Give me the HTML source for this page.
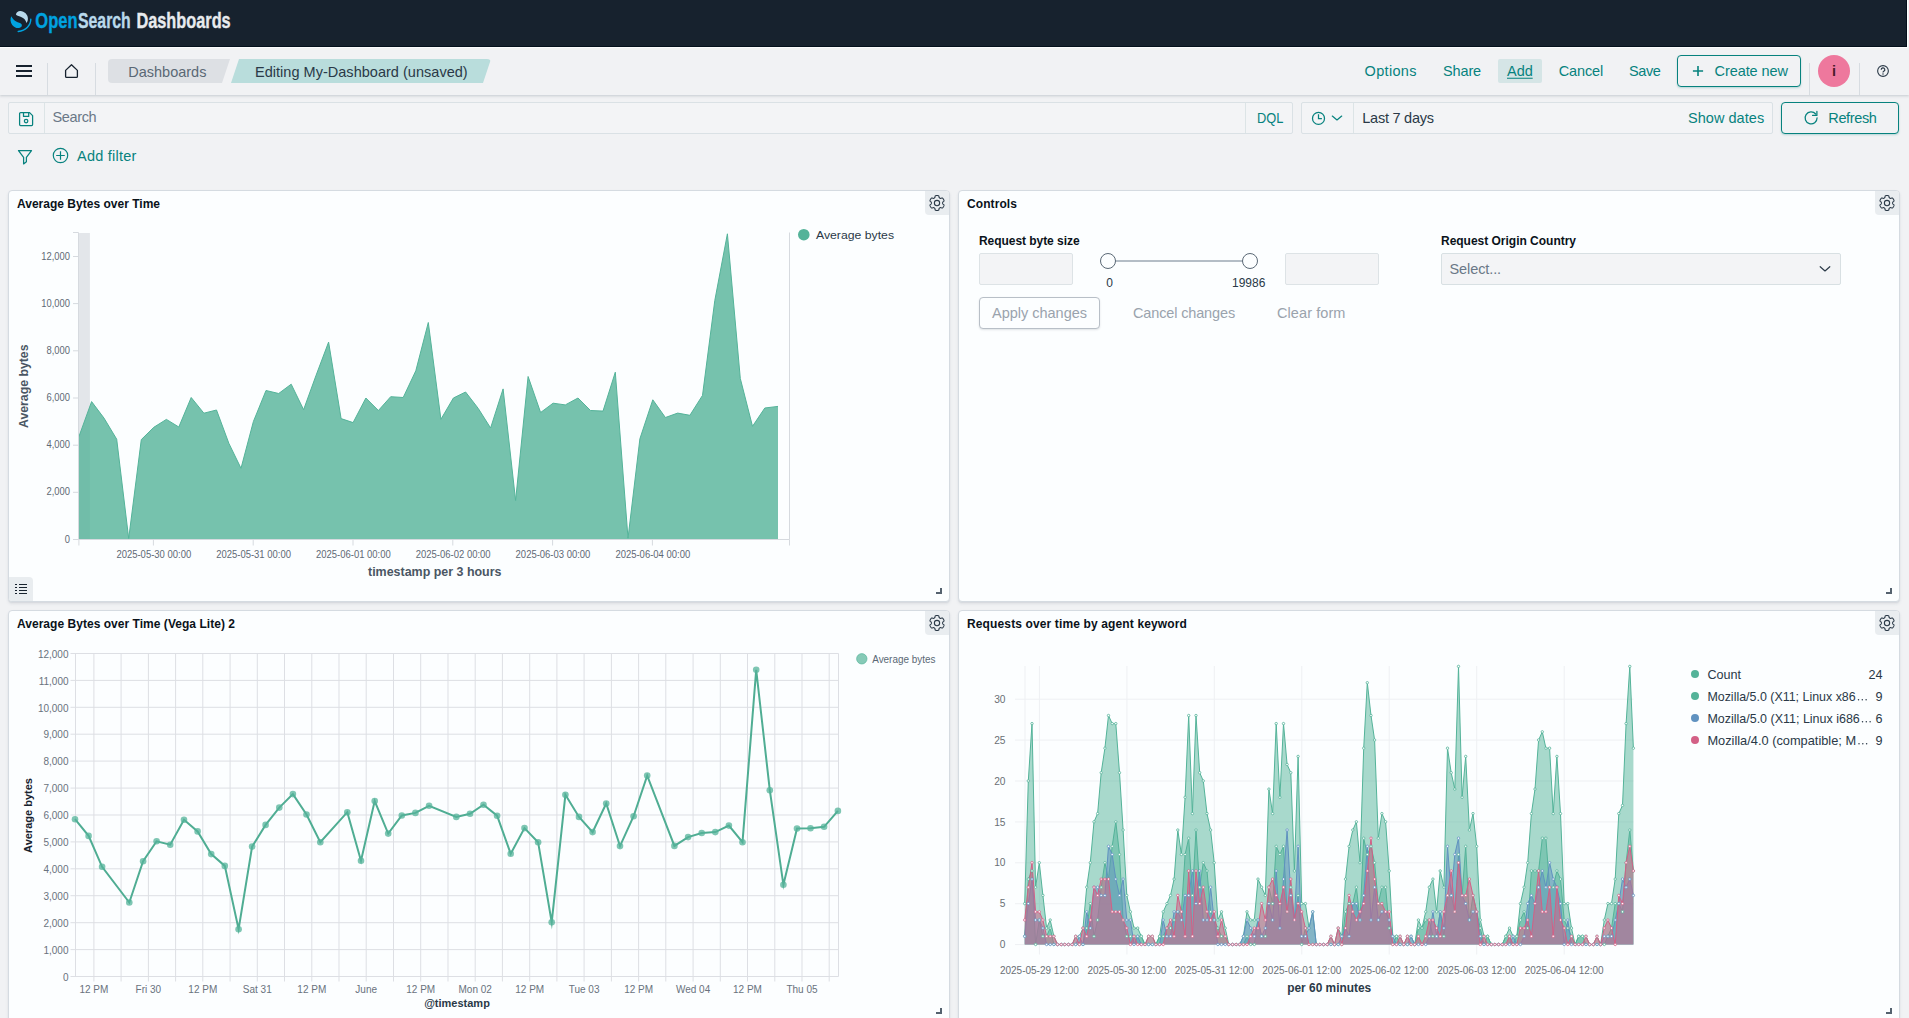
<!DOCTYPE html>
<html lang="en"><head><meta charset="utf-8"><title>My-Dashboard - OpenSearch Dashboards</title>
<style>
*{box-sizing:border-box}
html,body{margin:0;padding:0}
body{width:1909px;height:1018px;overflow:hidden;position:relative;background:#F1F2F4;
 font-family:"Liberation Sans",sans-serif;color:#2A3947;-webkit-font-smoothing:antialiased}
.abs{position:absolute}
.t{position:absolute;white-space:pre;line-height:1;transform-origin:0 50%}
.teal{color:#07827E}
.hdr{left:0;top:0;width:1907px;height:47px;background:#17222E;border-bottom:1px solid #04101C;border-right:1px solid #04101C}
.wl{background:#fff}
.nav{left:0;top:48px;width:1909px;height:47px;background:#F1F2F4;box-shadow:0 1px 2px rgba(60,75,90,.17),0 2px 3px rgba(60,75,90,.05)}
.vdiv{width:1px;background:#D7DCE1}
.bc1{left:108px;top:59px;width:122px;height:24px;background:#DDE0E4;border-radius:4px 0 0 4px;clip-path:polygon(0 0,100% 0,calc(100% - 8px) 100%,0 100%)}
.bc2{left:231px;top:59px;width:260px;height:24px;background:#B9DDDC;border-radius:0 4px 4px 0;clip-path:polygon(8px 0,100% 0,calc(100% - 8px) 100%,0 100%)}
.box{position:absolute;border:1px solid #DAE1E5;border-radius:2px;background:#F3F4F6}
.btn{position:absolute;border:1px solid #07827E;border-radius:4px;background:#F1F2F4;box-shadow:0 1px 2px rgba(7,130,126,.25)}
.panel{position:absolute;background:#FCFEFF;border:1px solid #D5DBE1;border-radius:4px;box-shadow:0 2px 3px rgba(60,80,100,.10),0 1px 1px rgba(60,80,100,.06);overflow:hidden}
.gear{position:absolute;right:0;top:0;width:24px;height:24px;background:#E9EDF0;border-radius:0 0 0 4px}
.ptitle{position:absolute;left:8px;top:6.400px;font-size:12px;font-weight:700;color:#0A121A;white-space:pre;line-height:14px}
svg{position:absolute;overflow:visible}
svg text{font-family:"Liberation Sans",sans-serif}
</style></head>
<body>
<div class="abs hdr"></div>
<div class="abs wl" style="left:0;top:47px;width:1908px;height:1px"></div>
<div class="abs wl" style="left:1907px;top:0;width:1px;height:48px"></div>
<svg style="left:0;top:0" width="240" height="47" viewBox="0 0 240 47">
<path d="M15.900 14.600C16.300 12.200 18.300 10.900 20.300 11.000C24.500 11.200 27.800 14.600 27.900 18.200C27.900 20.200 27.400 21.900 26.500 23.000C25.900 20.600 24.300 18.400 21.600 17.300C19.500 16.400 17.200 16.000 15.900 14.600Z" fill="#B9D9EB"/>
<path d="M11.300 16.300C10.100 18.900 10.200 22.300 12.200 24.900C14.200 27.500 17.400 28.600 19.900 27.700C21.800 27.000 22.400 25.200 21.400 23.900C20.400 22.600 18.200 22.400 16.200 21.400C14.000 20.300 12.400 18.600 11.300 16.300Z" fill="#00A3E0"/>
<path d="M30.800 19.100C31.000 25.000 26.000 30.600 18.200 31.500" stroke="#00A3E0" stroke-width="1.400" stroke-linecap="round" fill="none"/>
<text x="35.300" y="27.900" font-size="22.500" font-weight="700" fill="#00A3E0" stroke="#00A3E0" stroke-width="0.350" textLength="42.200" lengthAdjust="spacingAndGlyphs">Open</text>
<text x="78.000" y="27.900" font-size="22.500" font-weight="700" fill="#B9D9EB" stroke="#B9D9EB" stroke-width="0.350" textLength="52.800" lengthAdjust="spacingAndGlyphs">Search</text>
<text x="136.400" y="27.900" font-size="22.500" font-weight="700" fill="#E8EBEE" stroke="#E8EBEE" stroke-width="0.350" textLength="94.300" lengthAdjust="spacingAndGlyphs">Dashboards</text>
</svg>
<div class="abs nav"></div>
<svg style="left:16px;top:63px" width="16" height="16" viewBox="0 0 16 16"><path fill="#17222E" d="M0 2h16v2H0zM0 7h16v2H0zM0 12h16v2H0z"/></svg>
<div class="abs vdiv" style="left:47px;top:63px;height:32px"></div>
<div class="abs vdiv" style="left:95px;top:63px;height:32px"></div>
<svg style="left:63px;top:63px" width="16" height="16" viewBox="0 0 16 16"><path fill="none" stroke="#17222E" stroke-width="1.3" stroke-linejoin="round" d="M2.600 7.400 8.500 1.700l5.900 5.700v6.000a1 1 0 0 1-1 1H3.600a1 1 0 0 1-1-1z"/></svg>
<div class="abs bc1"></div><div class="abs bc2"></div>
<span class="t " style="left:128.3px;top:71.5px;font-size:14.5px;color:#5A6875;font-weight:400;transform:translateY(-50%);letter-spacing:-0.009px">Dashboards</span>
<span class="t " style="left:255px;top:71.5px;font-size:14.5px;color:#2A3947;font-weight:400;transform:translateY(-50%);letter-spacing:0.024px">Editing My-Dashboard (unsaved)</span>
<span class="t " style="left:1364.6px;top:71.3px;font-size:14.5px;color:#07827E;font-weight:400;transform:translateY(-50%);letter-spacing:0.317px">Options</span>
<span class="t " style="left:1443px;top:71.3px;font-size:14.5px;color:#07827E;font-weight:400;transform:translateY(-50%);letter-spacing:-0.141px">Share</span>
<div class="abs" style="left:1498px;top:59px;width:44px;height:24px;background:#D5E5E6;border-radius:2px"></div>
<span class="t " style="left:1507px;top:71.3px;font-size:14.5px;color:#07827E;font-weight:400;transform:translateY(-50%);text-decoration:underline;text-underline-offset:2px;letter-spacing:-0.038px">Add</span>
<span class="t " style="left:1558.8px;top:71.3px;font-size:14.5px;color:#07827E;font-weight:400;transform:translateY(-50%);letter-spacing:-0.157px">Cancel</span>
<span class="t " style="left:1629px;top:71.3px;font-size:14.5px;color:#07827E;font-weight:400;transform:translateY(-50%);letter-spacing:-0.416px">Save</span>
<div class="btn" style="left:1677px;top:55px;width:124px;height:32px"></div>
<svg style="left:1692px;top:65px" width="12" height="12" viewBox="0 0 12 12"><path d="M6 0.900v10.200M0.900 6h10.200" stroke="#07827E" stroke-width="1.600" fill="none"/></svg>
<span class="t " style="left:1714.6px;top:71.3px;font-size:14.5px;color:#07827E;font-weight:400;transform:translateY(-50%);letter-spacing:-0.096px">Create new</span>
<div class="abs vdiv" style="left:1809px;top:63px;height:32px"></div>
<div class="abs vdiv" style="left:1859px;top:63px;height:32px"></div>
<div class="abs" style="left:1818px;top:55px;width:32px;height:32px;border-radius:50%;background:#EE789D"></div>
<span class="t " style="left:1832.0px;top:70.5px;font-size:14.5px;color:#4A1A2A;font-weight:700;transform:translateY(-50%);">i</span>
<svg style="left:1877px;top:65px" width="12" height="12" viewBox="0 0 12 12"><circle cx="6" cy="6" r="5.350" fill="none" stroke="#2A3947" stroke-width="1.100"/><path d="M4.200 4.700a1.800 1.800 0 1 1 2.600 1.600c-0.500 0.300-0.800 0.600-0.800 1.200" fill="none" stroke="#2A3947" stroke-width="1.200"/><circle cx="6" cy="9.000" r="0.750" fill="#2A3947"/></svg>
<div class="box" style="left:8px;top:102px;width:1285px;height:32px"></div>
<div class="abs" style="left:44px;top:103px;width:1px;height:30px;background:#DCE4E6"></div>
<div class="abs" style="left:1245px;top:103px;width:1px;height:30px;background:#DCE4E6"></div>
<svg style="left:18px;top:111px" width="16" height="16" viewBox="0 0 16 16" fill="none" stroke="#07827E" stroke-width="1.250" stroke-linejoin="round">
<path d="M1.600 2.600a1 1 0 0 1 1-1h9.000l3.000 3.000v9.000a1 1 0 0 1-1 1H2.600a1 1 0 0 1-1-1z"/>
<path d="M5.500 1.600v3.800h5.200V1.600"/><circle cx="8.100" cy="10.100" r="1.750"/></svg>
<span class="t " style="left:52.6px;top:117.3px;font-size:14.5px;color:#6A7887;font-weight:400;transform:translateY(-50%);letter-spacing:-0.392px">Search</span>
<span class="t " style="left:1257px;top:117.6px;font-size:14.5px;color:#07827E;font-weight:400;transform:translateY(-50%);transform:translateY(-50%) scaleX(.886);">DQL</span>
<div class="box" style="left:1301px;top:102px;width:472px;height:32px"></div>
<div class="abs" style="left:1353px;top:103px;width:1px;height:30px;background:#DCE4E6"></div>
<svg style="left:1311px;top:111px" width="32" height="15" viewBox="0 0 32 15" fill="none" stroke="#07827E" stroke-width="1.250">
<circle cx="7.500" cy="7.400" r="6.000"/><path d="M7.500 3.300v4.300h3.400" /><path d="M21.300 5.100l4.700 3.800 4.700-3.800" stroke-linecap="round" stroke-linejoin="round"/></svg>
<span class="t " style="left:1362.3px;top:117.6px;font-size:14.5px;color:#2A3947;font-weight:400;transform:translateY(-50%);letter-spacing:-0.243px">Last 7 days</span>
<span class="t " style="left:1688px;top:117.6px;font-size:14.5px;color:#07827E;font-weight:400;transform:translateY(-50%);letter-spacing:0.042px">Show dates</span>
<div class="btn" style="left:1781px;top:102px;width:118px;height:32px"></div>
<svg style="left:1803px;top:110px" width="16" height="16" viewBox="0 0 16 16" fill="none" stroke="#07827E" stroke-width="1.250" stroke-linecap="round" stroke-linejoin="round">
<path d="M12.700 4.000A6.000 6.000 0 1 0 14.100 7.800"/><path d="M13.900 1.300v4.100H9.600"/></svg>
<span class="t " style="left:1828.3px;top:117.6px;font-size:14.5px;color:#07827E;font-weight:400;transform:translateY(-50%);letter-spacing:-0.369px">Refresh</span>
<svg style="left:17px;top:149px" width="16" height="16" viewBox="0 0 16 16" fill="none" stroke="#07827E" stroke-width="1.250" stroke-linejoin="round">
<path d="M1.500 1.600h13.000L9.400 8.300v4.400L6.600 14.900V8.300z"/></svg>
<svg style="left:52px;top:147px" width="17" height="17" viewBox="0 0 17 17" fill="none" stroke="#07827E" stroke-width="1.200">
<circle cx="8.500" cy="8.500" r="7.200"/><path d="M8.500 4.200v8.600M4.200 8.500h8.600"/></svg>
<span class="t " style="left:77px;top:155.6px;font-size:14.5px;color:#07827E;font-weight:400;transform:translateY(-50%);letter-spacing:0.247px">Add filter</span>
<div class="panel" style="left:8px;top:190px;width:942px;height:412px"><span class="ptitle" style="letter-spacing:0.011px">Average Bytes over Time</span><div class="gear"><svg style="left:4px;top:4px" width="16" height="16" viewBox="0 0 16 16" fill="none" stroke="#2A3947" stroke-width="1.050" stroke-linejoin="round"><path d="M13.65 8.00 L13.65 8.15 L13.65 8.30 L13.65 8.45 L13.67 8.60 L13.71 8.75 L13.81 8.92 L14.00 9.11 L14.33 9.35 L14.68 9.60 L14.92 9.86 L15.03 10.08 L15.04 10.29 L15.00 10.48 L14.95 10.67 L14.88 10.85 L14.80 11.03 L14.72 11.21 L14.64 11.38 L14.55 11.55 L14.45 11.72 L14.35 11.89 L14.25 12.06 L14.14 12.22 L14.03 12.38 L13.91 12.53 L13.78 12.68 L13.65 12.82 L13.50 12.95 L13.32 13.04 L13.07 13.07 L12.73 12.98 L12.33 12.81 L11.97 12.64 L11.70 12.57 L11.51 12.57 L11.35 12.61 L11.21 12.67 L11.08 12.75 L10.95 12.82 L10.83 12.89 L10.70 12.97 L10.57 13.04 L10.44 13.12 L10.32 13.21 L10.20 13.32 L10.11 13.49 L10.04 13.76 L10.00 14.15 L9.95 14.59 L9.86 14.92 L9.71 15.13 L9.54 15.24 L9.35 15.30 L9.16 15.35 L8.97 15.38 L8.78 15.41 L8.58 15.43 L8.39 15.44 L8.20 15.45 L8.00 15.45 L7.80 15.45 L7.61 15.44 L7.42 15.43 L7.22 15.41 L7.03 15.38 L6.84 15.35 L6.65 15.30 L6.46 15.24 L6.29 15.13 L6.14 14.92 L6.05 14.59 L6.00 14.15 L5.96 13.76 L5.89 13.49 L5.80 13.32 L5.68 13.21 L5.56 13.12 L5.43 13.04 L5.30 12.97 L5.18 12.89 L5.05 12.82 L4.92 12.75 L4.79 12.67 L4.65 12.61 L4.49 12.57 L4.30 12.57 L4.03 12.64 L3.67 12.81 L3.27 12.98 L2.93 13.07 L2.68 13.04 L2.50 12.95 L2.35 12.82 L2.22 12.68 L2.09 12.53 L1.97 12.38 L1.86 12.22 L1.75 12.06 L1.65 11.89 L1.55 11.72 L1.45 11.55 L1.36 11.38 L1.28 11.21 L1.20 11.03 L1.12 10.85 L1.05 10.67 L1.00 10.48 L0.96 10.29 L0.97 10.08 L1.08 9.86 L1.32 9.60 L1.67 9.35 L2.00 9.11 L2.19 8.92 L2.29 8.75 L2.33 8.60 L2.35 8.45 L2.35 8.30 L2.35 8.15 L2.35 8.00 L2.35 7.85 L2.35 7.70 L2.35 7.55 L2.33 7.40 L2.29 7.25 L2.19 7.08 L2.00 6.89 L1.67 6.65 L1.32 6.40 L1.08 6.14 L0.97 5.92 L0.96 5.71 L1.00 5.52 L1.05 5.33 L1.12 5.15 L1.20 4.97 L1.28 4.79 L1.36 4.62 L1.45 4.45 L1.55 4.28 L1.65 4.11 L1.75 3.94 L1.86 3.78 L1.97 3.62 L2.09 3.47 L2.22 3.32 L2.35 3.18 L2.50 3.05 L2.68 2.96 L2.93 2.93 L3.27 3.02 L3.67 3.19 L4.03 3.36 L4.30 3.43 L4.49 3.43 L4.65 3.39 L4.79 3.33 L4.92 3.25 L5.05 3.18 L5.17 3.11 L5.30 3.03 L5.43 2.96 L5.56 2.88 L5.68 2.79 L5.80 2.68 L5.89 2.51 L5.96 2.24 L6.00 1.85 L6.05 1.41 L6.14 1.08 L6.29 0.87 L6.46 0.76 L6.65 0.70 L6.84 0.65 L7.03 0.62 L7.22 0.59 L7.42 0.57 L7.61 0.56 L7.80 0.55 L8.00 0.55 L8.20 0.55 L8.39 0.56 L8.58 0.57 L8.78 0.59 L8.97 0.62 L9.16 0.65 L9.35 0.70 L9.54 0.76 L9.71 0.87 L9.86 1.08 L9.95 1.41 L10.00 1.85 L10.04 2.24 L10.11 2.51 L10.20 2.68 L10.32 2.79 L10.44 2.88 L10.57 2.96 L10.70 3.03 L10.83 3.11 L10.95 3.18 L11.08 3.25 L11.21 3.33 L11.35 3.39 L11.51 3.43 L11.70 3.43 L11.97 3.36 L12.33 3.19 L12.73 3.02 L13.07 2.93 L13.32 2.96 L13.50 3.05 L13.65 3.18 L13.78 3.32 L13.91 3.47 L14.03 3.62 L14.14 3.78 L14.25 3.94 L14.35 4.11 L14.45 4.28 L14.55 4.45 L14.64 4.62 L14.72 4.79 L14.80 4.97 L14.88 5.15 L14.95 5.33 L15.00 5.52 L15.04 5.71 L15.03 5.92 L14.92 6.14 L14.68 6.40 L14.33 6.65 L14.00 6.89 L13.81 7.08 L13.71 7.25 L13.67 7.40 L13.65 7.55 L13.65 7.70 L13.65 7.85Z"/><circle cx="8" cy="8" r="2.650"/></svg></div><svg style="left:-9px;top:-191px" width="1909" height="1018" viewBox="0 0 1909 1018"><rect x="78.900" y="233" width="11" height="306.500" fill="#E3E6EA"/><path d="M78.9 436.7 L91.6 401.6 L104 418.1 L116.7 439.2 L128.7 538.5 L141.3 439.6 L153.8 427.3 L166.4 419.4 L178.8 427 L191.2 397.5 L203.9 413.2 L216.5 410 L228.8 443.2 L241 468.3 L253.4 421.5 L266 390.5 L278.7 393.5 L291.2 384.2 L303.6 409.7 L315.9 375.8 L328.6 342.1 L341.1 418.6 L353.1 422.6 L365.9 398 L378.4 410.5 L390.7 396.7 L403.2 397.5 L415.8 370.8 L428.3 322.5 L440.9 419.3 L453.4 398 L465.6 392 L478.3 408.5 L490.6 428 L503.1 388.9 L515.6 500.5 L528.1 376.5 L540.6 412.5 L553.1 403.2 L565.3 404.9 L578 398 L590.5 410.5 L603 411.1 L615.3 372.2 L628 538.2 L639.9 438.8 L652.8 399.8 L665.4 417.5 L677.7 413.1 L689.9 415.3 L702.5 395.4 L714.8 300.5 L727.4 233.8 L740.3 378.5 L752.5 426.3 L764.8 408 L778 406.4 L778 539.2 L78.900 539.2Z" fill="#54B399" fill-opacity="0.800"/><path d="M78.9 436.7 L91.6 401.6 L104 418.1 L116.7 439.2 L128.7 538.5 L141.3 439.6 L153.8 427.3 L166.4 419.4 L178.8 427 L191.2 397.5 L203.9 413.2 L216.5 410 L228.8 443.2 L241 468.3 L253.4 421.5 L266 390.5 L278.7 393.5 L291.2 384.2 L303.6 409.7 L315.9 375.8 L328.6 342.1 L341.1 418.6 L353.1 422.6 L365.9 398 L378.4 410.5 L390.7 396.7 L403.2 397.5 L415.8 370.8 L428.3 322.5 L440.9 419.3 L453.4 398 L465.6 392 L478.3 408.5 L490.6 428 L503.1 388.9 L515.6 500.5 L528.1 376.5 L540.6 412.5 L553.1 403.2 L565.3 404.9 L578 398 L590.5 410.5 L603 411.1 L615.3 372.2 L628 538.2 L639.9 438.8 L652.8 399.8 L665.4 417.5 L677.7 413.1 L689.9 415.3 L702.5 395.4 L714.8 300.5 L727.4 233.8 L740.3 378.5 L752.5 426.3 L764.8 408 L778 406.4" fill="none" stroke="#54B399" stroke-width="1"/><path d="M73 232.500H78.500V539.500H789.500V232.500" fill="none" stroke="#D6DADF" stroke-width="1"/><path d="M789.500 539.500V545.500" stroke="#D6DADF" stroke-width="1"/><path d="M73 539.5H78.500" stroke="#D6DADF" stroke-width="1"/><text x="70" y="542.6" font-size="10.200" fill="#5F6975" text-anchor="end" textLength="5.2" lengthAdjust="spacingAndGlyphs">0</text><path d="M73 492.3H78.500" stroke="#D6DADF" stroke-width="1"/><text x="70" y="495.4" font-size="10.200" fill="#5F6975" text-anchor="end" textLength="23.5" lengthAdjust="spacingAndGlyphs">2,000</text><path d="M73 445.2H78.500" stroke="#D6DADF" stroke-width="1"/><text x="70" y="448.3" font-size="10.200" fill="#5F6975" text-anchor="end" textLength="23.5" lengthAdjust="spacingAndGlyphs">4,000</text><path d="M73 398H78.500" stroke="#D6DADF" stroke-width="1"/><text x="70" y="401.1" font-size="10.200" fill="#5F6975" text-anchor="end" textLength="23.5" lengthAdjust="spacingAndGlyphs">6,000</text><path d="M73 350.8H78.500" stroke="#D6DADF" stroke-width="1"/><text x="70" y="353.9" font-size="10.200" fill="#5F6975" text-anchor="end" textLength="23.5" lengthAdjust="spacingAndGlyphs">8,000</text><path d="M73 303.6H78.500" stroke="#D6DADF" stroke-width="1"/><text x="70" y="306.8" font-size="10.200" fill="#5F6975" text-anchor="end" textLength="28.7" lengthAdjust="spacingAndGlyphs">10,000</text><path d="M73 256.5H78.500" stroke="#D6DADF" stroke-width="1"/><text x="70" y="259.6" font-size="10.200" fill="#5F6975" text-anchor="end" textLength="28.7" lengthAdjust="spacingAndGlyphs">12,000</text><path d="M78.900 539.500V545.500" stroke="#D6DADF" stroke-width="1"/><path d="M153.4 539.500V545.500" stroke="#D6DADF" stroke-width="1"/><text x="116.4" y="557.600" font-size="10" fill="#5F6975" textLength="74.800" lengthAdjust="spacingAndGlyphs">2025-05-30 00:00</text><path d="M253.2 539.500V545.500" stroke="#D6DADF" stroke-width="1"/><text x="216.2" y="557.600" font-size="10" fill="#5F6975" textLength="74.800" lengthAdjust="spacingAndGlyphs">2025-05-31 00:00</text><path d="M353 539.500V545.500" stroke="#D6DADF" stroke-width="1"/><text x="316" y="557.600" font-size="10" fill="#5F6975" textLength="74.800" lengthAdjust="spacingAndGlyphs">2025-06-01 00:00</text><path d="M452.8 539.500V545.500" stroke="#D6DADF" stroke-width="1"/><text x="415.8" y="557.600" font-size="10" fill="#5F6975" textLength="74.800" lengthAdjust="spacingAndGlyphs">2025-06-02 00:00</text><path d="M552.6 539.500V545.500" stroke="#D6DADF" stroke-width="1"/><text x="515.6" y="557.600" font-size="10" fill="#5F6975" textLength="74.800" lengthAdjust="spacingAndGlyphs">2025-06-03 00:00</text><path d="M652.4 539.500V545.500" stroke="#D6DADF" stroke-width="1"/><text x="615.4" y="557.600" font-size="10" fill="#5F6975" textLength="74.800" lengthAdjust="spacingAndGlyphs">2025-06-04 00:00</text><text x="368" y="575.800" font-size="12.400" font-weight="700" fill="#4A5663" textLength="133.500" lengthAdjust="spacingAndGlyphs">timestamp per 3 hours</text><text transform="translate(28.300 428) rotate(-90)" font-size="12.400" font-weight="700" fill="#4A5663" textLength="83.500" lengthAdjust="spacingAndGlyphs">Average bytes</text><circle cx="803.800" cy="234.700" r="5.800" fill="#54B399"/><text x="816" y="238.800" font-size="11.800" fill="#2A3947" textLength="78" lengthAdjust="spacingAndGlyphs">Average bytes</text></svg><div class="abs" style="left:0;bottom:0;width:24px;height:24px;background:#E9EDF0;border-radius:0 4px 0 0"></div><svg style="left:6px;bottom:6px" width="12" height="12" viewBox="0 0 12 12"><path d="M0 1.500h2M0 4.500h2M0 7.500h2M0 10.500h2M4 1.500h8M4 4.500h8M4 7.500h8M4 10.500h8" stroke="#17222E" stroke-width="1.100" fill="none"/></svg><svg style="left:927px;top:397px" width="6" height="6" viewBox="0 0 6 6"><path d="M5 0V5H0" fill="none" stroke="#55626F" stroke-width="2" stroke-linejoin="miter"/></svg></div>
<div class="panel" style="left:958px;top:190px;width:942px;height:412px"><span class="ptitle" style="letter-spacing:0.082px">Controls</span><div class="gear"><svg style="left:4px;top:4px" width="16" height="16" viewBox="0 0 16 16" fill="none" stroke="#2A3947" stroke-width="1.050" stroke-linejoin="round"><path d="M13.65 8.00 L13.65 8.15 L13.65 8.30 L13.65 8.45 L13.67 8.60 L13.71 8.75 L13.81 8.92 L14.00 9.11 L14.33 9.35 L14.68 9.60 L14.92 9.86 L15.03 10.08 L15.04 10.29 L15.00 10.48 L14.95 10.67 L14.88 10.85 L14.80 11.03 L14.72 11.21 L14.64 11.38 L14.55 11.55 L14.45 11.72 L14.35 11.89 L14.25 12.06 L14.14 12.22 L14.03 12.38 L13.91 12.53 L13.78 12.68 L13.65 12.82 L13.50 12.95 L13.32 13.04 L13.07 13.07 L12.73 12.98 L12.33 12.81 L11.97 12.64 L11.70 12.57 L11.51 12.57 L11.35 12.61 L11.21 12.67 L11.08 12.75 L10.95 12.82 L10.83 12.89 L10.70 12.97 L10.57 13.04 L10.44 13.12 L10.32 13.21 L10.20 13.32 L10.11 13.49 L10.04 13.76 L10.00 14.15 L9.95 14.59 L9.86 14.92 L9.71 15.13 L9.54 15.24 L9.35 15.30 L9.16 15.35 L8.97 15.38 L8.78 15.41 L8.58 15.43 L8.39 15.44 L8.20 15.45 L8.00 15.45 L7.80 15.45 L7.61 15.44 L7.42 15.43 L7.22 15.41 L7.03 15.38 L6.84 15.35 L6.65 15.30 L6.46 15.24 L6.29 15.13 L6.14 14.92 L6.05 14.59 L6.00 14.15 L5.96 13.76 L5.89 13.49 L5.80 13.32 L5.68 13.21 L5.56 13.12 L5.43 13.04 L5.30 12.97 L5.18 12.89 L5.05 12.82 L4.92 12.75 L4.79 12.67 L4.65 12.61 L4.49 12.57 L4.30 12.57 L4.03 12.64 L3.67 12.81 L3.27 12.98 L2.93 13.07 L2.68 13.04 L2.50 12.95 L2.35 12.82 L2.22 12.68 L2.09 12.53 L1.97 12.38 L1.86 12.22 L1.75 12.06 L1.65 11.89 L1.55 11.72 L1.45 11.55 L1.36 11.38 L1.28 11.21 L1.20 11.03 L1.12 10.85 L1.05 10.67 L1.00 10.48 L0.96 10.29 L0.97 10.08 L1.08 9.86 L1.32 9.60 L1.67 9.35 L2.00 9.11 L2.19 8.92 L2.29 8.75 L2.33 8.60 L2.35 8.45 L2.35 8.30 L2.35 8.15 L2.35 8.00 L2.35 7.85 L2.35 7.70 L2.35 7.55 L2.33 7.40 L2.29 7.25 L2.19 7.08 L2.00 6.89 L1.67 6.65 L1.32 6.40 L1.08 6.14 L0.97 5.92 L0.96 5.71 L1.00 5.52 L1.05 5.33 L1.12 5.15 L1.20 4.97 L1.28 4.79 L1.36 4.62 L1.45 4.45 L1.55 4.28 L1.65 4.11 L1.75 3.94 L1.86 3.78 L1.97 3.62 L2.09 3.47 L2.22 3.32 L2.35 3.18 L2.50 3.05 L2.68 2.96 L2.93 2.93 L3.27 3.02 L3.67 3.19 L4.03 3.36 L4.30 3.43 L4.49 3.43 L4.65 3.39 L4.79 3.33 L4.92 3.25 L5.05 3.18 L5.17 3.11 L5.30 3.03 L5.43 2.96 L5.56 2.88 L5.68 2.79 L5.80 2.68 L5.89 2.51 L5.96 2.24 L6.00 1.85 L6.05 1.41 L6.14 1.08 L6.29 0.87 L6.46 0.76 L6.65 0.70 L6.84 0.65 L7.03 0.62 L7.22 0.59 L7.42 0.57 L7.61 0.56 L7.80 0.55 L8.00 0.55 L8.20 0.55 L8.39 0.56 L8.58 0.57 L8.78 0.59 L8.97 0.62 L9.16 0.65 L9.35 0.70 L9.54 0.76 L9.71 0.87 L9.86 1.08 L9.95 1.41 L10.00 1.85 L10.04 2.24 L10.11 2.51 L10.20 2.68 L10.32 2.79 L10.44 2.88 L10.57 2.96 L10.70 3.03 L10.83 3.11 L10.95 3.18 L11.08 3.25 L11.21 3.33 L11.35 3.39 L11.51 3.43 L11.70 3.43 L11.97 3.36 L12.33 3.19 L12.73 3.02 L13.07 2.93 L13.32 2.96 L13.50 3.05 L13.65 3.18 L13.78 3.32 L13.91 3.47 L14.03 3.62 L14.14 3.78 L14.25 3.94 L14.35 4.11 L14.45 4.28 L14.55 4.45 L14.64 4.62 L14.72 4.79 L14.80 4.97 L14.88 5.15 L14.95 5.33 L15.00 5.52 L15.04 5.71 L15.03 5.92 L14.92 6.14 L14.68 6.40 L14.33 6.65 L14.00 6.89 L13.81 7.08 L13.71 7.25 L13.67 7.40 L13.65 7.55 L13.65 7.70 L13.65 7.85Z"/><circle cx="8" cy="8" r="2.650"/></svg></div><span class="t " style="left:20px;top:49.5px;font-size:12px;color:#0A121A;font-weight:700;transform:translateY(-50%);letter-spacing:-0.051px">Request byte size</span><div class="box" style="left:20px;top:62px;width:94px;height:32px;border-color:#DDE3E6;background:#F3F4F6"></div><div class="box" style="left:326px;top:62px;width:94px;height:32px;border-color:#DDE3E6;background:#F3F4F6"></div><div class="abs" style="left:148px;top:69px;width:142px;height:2px;background:#B4BDC6"></div><div class="abs" style="left:140.5px;top:62px;width:16px;height:16px;border-radius:50%;background:#FCFEFF;border:1.500px solid #5A6875"></div><div class="abs" style="left:282.5px;top:62px;width:16px;height:16px;border-radius:50%;background:#FCFEFF;border:1.500px solid #5A6875"></div><span class="t " style="left:147.29999999999995px;top:92.39999999999998px;font-size:12px;color:#2A3947;font-weight:400;transform:translateY(-50%);">0</span><span class="t " style="left:273px;top:92.39999999999998px;font-size:12px;color:#2A3947;font-weight:400;transform:translateY(-50%);letter-spacing:0.005px">19986</span><div class="abs" style="left:20px;top:106px;width:121px;height:32px;border:1px solid #B8BFC7;border-radius:4px;background:#FCFEFF;box-shadow:0 1px 2px rgba(60,75,90,.15)"></div><span class="t " style="left:33px;top:122px;font-size:14.5px;color:#9AA3AD;font-weight:400;transform:translateY(-50%);letter-spacing:-0.010px">Apply changes</span><span class="t " style="left:174px;top:122px;font-size:14.5px;color:#9AA3AD;font-weight:400;transform:translateY(-50%);letter-spacing:-0.143px">Cancel changes</span><span class="t " style="left:318px;top:122px;font-size:14.5px;color:#9AA3AD;font-weight:400;transform:translateY(-50%);letter-spacing:0.081px">Clear form</span><span class="t " style="left:482px;top:49.5px;font-size:12px;color:#0A121A;font-weight:700;transform:translateY(-50%);letter-spacing:-0.016px">Request Origin Country</span><div class="box" style="left:482px;top:62px;width:400px;height:32px;border-color:#D8E0E3;background:#F3F4F6"></div><span class="t " style="left:490.5px;top:78px;font-size:14.5px;color:#6A7887;font-weight:400;transform:translateY(-50%);letter-spacing:-0.099px">Select...</span><svg style="left:860px;top:73px" width="12" height="10" viewBox="0 0 12 10"><path d="M1.200 2.700l4.800 4.300 4.800-4.300" fill="none" stroke="#2A3947" stroke-width="1.150" stroke-linecap="round" stroke-linejoin="round"/></svg><svg style="left:927px;top:397px" width="6" height="6" viewBox="0 0 6 6"><path d="M5 0V5H0" fill="none" stroke="#55626F" stroke-width="2" stroke-linejoin="miter"/></svg></div>
<div class="panel" style="left:8px;top:610px;width:942px;height:412px"><span class="ptitle" style="letter-spacing:0.033px">Average Bytes over Time (Vega Lite) 2</span><div class="gear"><svg style="left:4px;top:4px" width="16" height="16" viewBox="0 0 16 16" fill="none" stroke="#2A3947" stroke-width="1.050" stroke-linejoin="round"><path d="M13.65 8.00 L13.65 8.15 L13.65 8.30 L13.65 8.45 L13.67 8.60 L13.71 8.75 L13.81 8.92 L14.00 9.11 L14.33 9.35 L14.68 9.60 L14.92 9.86 L15.03 10.08 L15.04 10.29 L15.00 10.48 L14.95 10.67 L14.88 10.85 L14.80 11.03 L14.72 11.21 L14.64 11.38 L14.55 11.55 L14.45 11.72 L14.35 11.89 L14.25 12.06 L14.14 12.22 L14.03 12.38 L13.91 12.53 L13.78 12.68 L13.65 12.82 L13.50 12.95 L13.32 13.04 L13.07 13.07 L12.73 12.98 L12.33 12.81 L11.97 12.64 L11.70 12.57 L11.51 12.57 L11.35 12.61 L11.21 12.67 L11.08 12.75 L10.95 12.82 L10.83 12.89 L10.70 12.97 L10.57 13.04 L10.44 13.12 L10.32 13.21 L10.20 13.32 L10.11 13.49 L10.04 13.76 L10.00 14.15 L9.95 14.59 L9.86 14.92 L9.71 15.13 L9.54 15.24 L9.35 15.30 L9.16 15.35 L8.97 15.38 L8.78 15.41 L8.58 15.43 L8.39 15.44 L8.20 15.45 L8.00 15.45 L7.80 15.45 L7.61 15.44 L7.42 15.43 L7.22 15.41 L7.03 15.38 L6.84 15.35 L6.65 15.30 L6.46 15.24 L6.29 15.13 L6.14 14.92 L6.05 14.59 L6.00 14.15 L5.96 13.76 L5.89 13.49 L5.80 13.32 L5.68 13.21 L5.56 13.12 L5.43 13.04 L5.30 12.97 L5.18 12.89 L5.05 12.82 L4.92 12.75 L4.79 12.67 L4.65 12.61 L4.49 12.57 L4.30 12.57 L4.03 12.64 L3.67 12.81 L3.27 12.98 L2.93 13.07 L2.68 13.04 L2.50 12.95 L2.35 12.82 L2.22 12.68 L2.09 12.53 L1.97 12.38 L1.86 12.22 L1.75 12.06 L1.65 11.89 L1.55 11.72 L1.45 11.55 L1.36 11.38 L1.28 11.21 L1.20 11.03 L1.12 10.85 L1.05 10.67 L1.00 10.48 L0.96 10.29 L0.97 10.08 L1.08 9.86 L1.32 9.60 L1.67 9.35 L2.00 9.11 L2.19 8.92 L2.29 8.75 L2.33 8.60 L2.35 8.45 L2.35 8.30 L2.35 8.15 L2.35 8.00 L2.35 7.85 L2.35 7.70 L2.35 7.55 L2.33 7.40 L2.29 7.25 L2.19 7.08 L2.00 6.89 L1.67 6.65 L1.32 6.40 L1.08 6.14 L0.97 5.92 L0.96 5.71 L1.00 5.52 L1.05 5.33 L1.12 5.15 L1.20 4.97 L1.28 4.79 L1.36 4.62 L1.45 4.45 L1.55 4.28 L1.65 4.11 L1.75 3.94 L1.86 3.78 L1.97 3.62 L2.09 3.47 L2.22 3.32 L2.35 3.18 L2.50 3.05 L2.68 2.96 L2.93 2.93 L3.27 3.02 L3.67 3.19 L4.03 3.36 L4.30 3.43 L4.49 3.43 L4.65 3.39 L4.79 3.33 L4.92 3.25 L5.05 3.18 L5.17 3.11 L5.30 3.03 L5.43 2.96 L5.56 2.88 L5.68 2.79 L5.80 2.68 L5.89 2.51 L5.96 2.24 L6.00 1.85 L6.05 1.41 L6.14 1.08 L6.29 0.87 L6.46 0.76 L6.65 0.70 L6.84 0.65 L7.03 0.62 L7.22 0.59 L7.42 0.57 L7.61 0.56 L7.80 0.55 L8.00 0.55 L8.20 0.55 L8.39 0.56 L8.58 0.57 L8.78 0.59 L8.97 0.62 L9.16 0.65 L9.35 0.70 L9.54 0.76 L9.71 0.87 L9.86 1.08 L9.95 1.41 L10.00 1.85 L10.04 2.24 L10.11 2.51 L10.20 2.68 L10.32 2.79 L10.44 2.88 L10.57 2.96 L10.70 3.03 L10.83 3.11 L10.95 3.18 L11.08 3.25 L11.21 3.33 L11.35 3.39 L11.51 3.43 L11.70 3.43 L11.97 3.36 L12.33 3.19 L12.73 3.02 L13.07 2.93 L13.32 2.96 L13.50 3.05 L13.65 3.18 L13.78 3.32 L13.91 3.47 L14.03 3.62 L14.14 3.78 L14.25 3.94 L14.35 4.11 L14.45 4.28 L14.55 4.45 L14.64 4.62 L14.72 4.79 L14.80 4.97 L14.88 5.15 L14.95 5.33 L15.00 5.52 L15.04 5.71 L15.03 5.92 L14.92 6.14 L14.68 6.40 L14.33 6.65 L14.00 6.89 L13.81 7.08 L13.71 7.25 L13.67 7.40 L13.65 7.55 L13.65 7.70 L13.65 7.85Z"/><circle cx="8" cy="8" r="2.650"/></svg></div><svg style="left:-9px;top:-611px" width="1909" height="1018" viewBox="0 0 1909 1018"><path d="M70.500 976.5H838.5M70.500 949.6H838.5M70.500 922.7H838.5M70.500 895.7H838.5M70.500 868.8H838.5M70.500 841.9H838.5M70.500 815H838.5M70.500 788.1H838.5M70.500 761.1H838.5M70.500 734.2H838.5M70.500 707.3H838.5M70.500 680.4H838.5M70.500 653.5H838.5M93.9 653.5V981.500M121.1 653.5V981.500M148.4 653.5V981.500M175.6 653.5V981.500M202.8 653.5V981.500M230.1 653.5V981.500M257.3 653.5V981.500M284.5 653.5V981.500M311.8 653.5V981.500M339 653.5V981.500M366.2 653.5V981.500M393.5 653.5V981.500M420.7 653.5V981.500M448 653.5V981.500M475.2 653.5V981.500M502.4 653.5V981.500M529.7 653.5V981.500M556.9 653.5V981.500M584.1 653.5V981.500M611.4 653.5V981.500M638.6 653.5V981.500M665.8 653.5V981.500M693.1 653.5V981.500M720.3 653.5V981.500M747.5 653.5V981.500M774.8 653.5V981.500M802 653.5V981.500M829.2 653.5V981.500M75.5 653.5V976.5M838.5 653.5V976.5" fill="none" stroke="#DDDFE4" stroke-width="1"/><text x="68.500" y="980.7" font-size="10" fill="#69727D" text-anchor="end">0</text><text x="68.500" y="953.8" font-size="10" fill="#69727D" text-anchor="end">1,000</text><text x="68.500" y="926.9" font-size="10" fill="#69727D" text-anchor="end">2,000</text><text x="68.500" y="899.9" font-size="10" fill="#69727D" text-anchor="end">3,000</text><text x="68.500" y="873" font-size="10" fill="#69727D" text-anchor="end">4,000</text><text x="68.500" y="846.1" font-size="10" fill="#69727D" text-anchor="end">5,000</text><text x="68.500" y="819.2" font-size="10" fill="#69727D" text-anchor="end">6,000</text><text x="68.500" y="792.3" font-size="10" fill="#69727D" text-anchor="end">7,000</text><text x="68.500" y="765.3" font-size="10" fill="#69727D" text-anchor="end">8,000</text><text x="68.500" y="738.4" font-size="10" fill="#69727D" text-anchor="end">9,000</text><text x="68.500" y="711.5" font-size="10" fill="#69727D" text-anchor="end">10,000</text><text x="68.500" y="684.6" font-size="10" fill="#69727D" text-anchor="end">11,000</text><text x="68.500" y="657.7" font-size="10" fill="#69727D" text-anchor="end">12,000</text><text x="93.9" y="993.200" font-size="10" fill="#69727D" text-anchor="middle">12 PM</text><text x="148.4" y="993.200" font-size="10" fill="#69727D" text-anchor="middle">Fri 30</text><text x="202.8" y="993.200" font-size="10" fill="#69727D" text-anchor="middle">12 PM</text><text x="257.3" y="993.200" font-size="10" fill="#69727D" text-anchor="middle">Sat 31</text><text x="311.8" y="993.200" font-size="10" fill="#69727D" text-anchor="middle">12 PM</text><text x="366.2" y="993.200" font-size="10" fill="#69727D" text-anchor="middle">June</text><text x="420.7" y="993.200" font-size="10" fill="#69727D" text-anchor="middle">12 PM</text><text x="475.2" y="993.200" font-size="10" fill="#69727D" text-anchor="middle">Mon 02</text><text x="529.7" y="993.200" font-size="10" fill="#69727D" text-anchor="middle">12 PM</text><text x="584.1" y="993.200" font-size="10" fill="#69727D" text-anchor="middle">Tue 03</text><text x="638.6" y="993.200" font-size="10" fill="#69727D" text-anchor="middle">12 PM</text><text x="693.1" y="993.200" font-size="10" fill="#69727D" text-anchor="middle">Wed 04</text><text x="747.5" y="993.200" font-size="10" fill="#69727D" text-anchor="middle">12 PM</text><text x="802" y="993.200" font-size="10" fill="#69727D" text-anchor="middle">Thu 05</text><text x="457" y="1007" font-size="11" font-weight="700" fill="#2A3947" text-anchor="middle">@timestamp</text><text transform="translate(32 815.500) rotate(-90)" font-size="11" font-weight="700" fill="#17222E" text-anchor="middle">Average bytes</text><path d="M75 819.2 L88.6 835.9 L102.1 866.8 L129.3 902.5 L143.1 861.2 L156.6 841.3 L170.2 844.7 L184 819.8 L197.6 831.4 L211.2 854.1 L224.8 865.9 L238.6 929.2 L252.1 846.6 L265.6 824.9 L279.3 807.6 L292.9 794.1 L306.5 814.5 L320.3 842.2 L347.3 812.2 L361 860.8 L374.7 801 L388.2 833.6 L401.8 815.5 L415.4 812.9 L429.1 805.8 L456.3 816.9 L470 813.8 L483.5 804.7 L497.1 815.7 L510.7 853.7 L524.5 828.1 L538.1 842.2 L551.7 922.2 L565.4 794.8 L579 816.9 L592.6 832.1 L606.2 803.5 L620 846.1 L633.6 816.2 L647.2 775.6 L674.4 845.9 L688.1 837.1 L701.7 833 L715.3 832.1 L728.9 825.6 L742.5 842.2 L756.2 669.8 L769.8 790.2 L783.4 884.8 L797 828.5 L810.5 828.2 L824.1 826.8 L837.9 810.9" fill="none" stroke="#4FAD93" stroke-width="2" stroke-linejoin="miter" stroke-miterlimit="10"/><circle cx="75" cy="819.2" r="3.300" fill="#54B399" fill-opacity="0.750"/><circle cx="88.6" cy="835.9" r="3.300" fill="#54B399" fill-opacity="0.750"/><circle cx="102.1" cy="866.8" r="3.300" fill="#54B399" fill-opacity="0.750"/><circle cx="129.3" cy="902.5" r="3.300" fill="#54B399" fill-opacity="0.750"/><circle cx="143.1" cy="861.2" r="3.300" fill="#54B399" fill-opacity="0.750"/><circle cx="156.6" cy="841.3" r="3.300" fill="#54B399" fill-opacity="0.750"/><circle cx="170.2" cy="844.7" r="3.300" fill="#54B399" fill-opacity="0.750"/><circle cx="184" cy="819.8" r="3.300" fill="#54B399" fill-opacity="0.750"/><circle cx="197.6" cy="831.4" r="3.300" fill="#54B399" fill-opacity="0.750"/><circle cx="211.2" cy="854.1" r="3.300" fill="#54B399" fill-opacity="0.750"/><circle cx="224.8" cy="865.9" r="3.300" fill="#54B399" fill-opacity="0.750"/><circle cx="238.6" cy="929.2" r="3.300" fill="#54B399" fill-opacity="0.750"/><circle cx="252.1" cy="846.6" r="3.300" fill="#54B399" fill-opacity="0.750"/><circle cx="265.6" cy="824.9" r="3.300" fill="#54B399" fill-opacity="0.750"/><circle cx="279.3" cy="807.6" r="3.300" fill="#54B399" fill-opacity="0.750"/><circle cx="292.9" cy="794.1" r="3.300" fill="#54B399" fill-opacity="0.750"/><circle cx="306.5" cy="814.5" r="3.300" fill="#54B399" fill-opacity="0.750"/><circle cx="320.3" cy="842.2" r="3.300" fill="#54B399" fill-opacity="0.750"/><circle cx="347.3" cy="812.2" r="3.300" fill="#54B399" fill-opacity="0.750"/><circle cx="361" cy="860.8" r="3.300" fill="#54B399" fill-opacity="0.750"/><circle cx="374.7" cy="801" r="3.300" fill="#54B399" fill-opacity="0.750"/><circle cx="388.2" cy="833.6" r="3.300" fill="#54B399" fill-opacity="0.750"/><circle cx="401.8" cy="815.5" r="3.300" fill="#54B399" fill-opacity="0.750"/><circle cx="415.4" cy="812.9" r="3.300" fill="#54B399" fill-opacity="0.750"/><circle cx="429.1" cy="805.8" r="3.300" fill="#54B399" fill-opacity="0.750"/><circle cx="456.3" cy="816.9" r="3.300" fill="#54B399" fill-opacity="0.750"/><circle cx="470" cy="813.8" r="3.300" fill="#54B399" fill-opacity="0.750"/><circle cx="483.5" cy="804.7" r="3.300" fill="#54B399" fill-opacity="0.750"/><circle cx="497.1" cy="815.7" r="3.300" fill="#54B399" fill-opacity="0.750"/><circle cx="510.7" cy="853.7" r="3.300" fill="#54B399" fill-opacity="0.750"/><circle cx="524.5" cy="828.1" r="3.300" fill="#54B399" fill-opacity="0.750"/><circle cx="538.1" cy="842.2" r="3.300" fill="#54B399" fill-opacity="0.750"/><circle cx="551.7" cy="922.2" r="3.300" fill="#54B399" fill-opacity="0.750"/><circle cx="565.4" cy="794.8" r="3.300" fill="#54B399" fill-opacity="0.750"/><circle cx="579" cy="816.9" r="3.300" fill="#54B399" fill-opacity="0.750"/><circle cx="592.6" cy="832.1" r="3.300" fill="#54B399" fill-opacity="0.750"/><circle cx="606.2" cy="803.5" r="3.300" fill="#54B399" fill-opacity="0.750"/><circle cx="620" cy="846.1" r="3.300" fill="#54B399" fill-opacity="0.750"/><circle cx="633.6" cy="816.2" r="3.300" fill="#54B399" fill-opacity="0.750"/><circle cx="647.2" cy="775.6" r="3.300" fill="#54B399" fill-opacity="0.750"/><circle cx="674.4" cy="845.9" r="3.300" fill="#54B399" fill-opacity="0.750"/><circle cx="688.1" cy="837.1" r="3.300" fill="#54B399" fill-opacity="0.750"/><circle cx="701.7" cy="833" r="3.300" fill="#54B399" fill-opacity="0.750"/><circle cx="715.3" cy="832.1" r="3.300" fill="#54B399" fill-opacity="0.750"/><circle cx="728.9" cy="825.6" r="3.300" fill="#54B399" fill-opacity="0.750"/><circle cx="742.5" cy="842.2" r="3.300" fill="#54B399" fill-opacity="0.750"/><circle cx="756.2" cy="669.8" r="3.300" fill="#54B399" fill-opacity="0.750"/><circle cx="769.8" cy="790.2" r="3.300" fill="#54B399" fill-opacity="0.750"/><circle cx="783.4" cy="884.8" r="3.300" fill="#54B399" fill-opacity="0.750"/><circle cx="797" cy="828.5" r="3.300" fill="#54B399" fill-opacity="0.750"/><circle cx="810.5" cy="828.2" r="3.300" fill="#54B399" fill-opacity="0.750"/><circle cx="824.1" cy="826.8" r="3.300" fill="#54B399" fill-opacity="0.750"/><circle cx="837.9" cy="810.9" r="3.300" fill="#54B399" fill-opacity="0.750"/><circle cx="861.800" cy="658.800" r="5.200" fill="#54B399" fill-opacity="0.700" stroke="#54B399" stroke-opacity="0.800" stroke-width="0.800"/><text x="872.200" y="662.600" font-size="10.200" fill="#5A6875" textLength="63.300" lengthAdjust="spacingAndGlyphs">Average bytes</text></svg><svg style="left:927px;top:397px" width="6" height="6" viewBox="0 0 6 6"><path d="M5 0V5H0" fill="none" stroke="#55626F" stroke-width="2" stroke-linejoin="miter"/></svg></div>
<div class="panel" style="left:958px;top:610px;width:942px;height:412px"><span class="ptitle" style="letter-spacing:0.131px">Requests over time by agent keyword</span><div class="gear"><svg style="left:4px;top:4px" width="16" height="16" viewBox="0 0 16 16" fill="none" stroke="#2A3947" stroke-width="1.050" stroke-linejoin="round"><path d="M13.65 8.00 L13.65 8.15 L13.65 8.30 L13.65 8.45 L13.67 8.60 L13.71 8.75 L13.81 8.92 L14.00 9.11 L14.33 9.35 L14.68 9.60 L14.92 9.86 L15.03 10.08 L15.04 10.29 L15.00 10.48 L14.95 10.67 L14.88 10.85 L14.80 11.03 L14.72 11.21 L14.64 11.38 L14.55 11.55 L14.45 11.72 L14.35 11.89 L14.25 12.06 L14.14 12.22 L14.03 12.38 L13.91 12.53 L13.78 12.68 L13.65 12.82 L13.50 12.95 L13.32 13.04 L13.07 13.07 L12.73 12.98 L12.33 12.81 L11.97 12.64 L11.70 12.57 L11.51 12.57 L11.35 12.61 L11.21 12.67 L11.08 12.75 L10.95 12.82 L10.83 12.89 L10.70 12.97 L10.57 13.04 L10.44 13.12 L10.32 13.21 L10.20 13.32 L10.11 13.49 L10.04 13.76 L10.00 14.15 L9.95 14.59 L9.86 14.92 L9.71 15.13 L9.54 15.24 L9.35 15.30 L9.16 15.35 L8.97 15.38 L8.78 15.41 L8.58 15.43 L8.39 15.44 L8.20 15.45 L8.00 15.45 L7.80 15.45 L7.61 15.44 L7.42 15.43 L7.22 15.41 L7.03 15.38 L6.84 15.35 L6.65 15.30 L6.46 15.24 L6.29 15.13 L6.14 14.92 L6.05 14.59 L6.00 14.15 L5.96 13.76 L5.89 13.49 L5.80 13.32 L5.68 13.21 L5.56 13.12 L5.43 13.04 L5.30 12.97 L5.18 12.89 L5.05 12.82 L4.92 12.75 L4.79 12.67 L4.65 12.61 L4.49 12.57 L4.30 12.57 L4.03 12.64 L3.67 12.81 L3.27 12.98 L2.93 13.07 L2.68 13.04 L2.50 12.95 L2.35 12.82 L2.22 12.68 L2.09 12.53 L1.97 12.38 L1.86 12.22 L1.75 12.06 L1.65 11.89 L1.55 11.72 L1.45 11.55 L1.36 11.38 L1.28 11.21 L1.20 11.03 L1.12 10.85 L1.05 10.67 L1.00 10.48 L0.96 10.29 L0.97 10.08 L1.08 9.86 L1.32 9.60 L1.67 9.35 L2.00 9.11 L2.19 8.92 L2.29 8.75 L2.33 8.60 L2.35 8.45 L2.35 8.30 L2.35 8.15 L2.35 8.00 L2.35 7.85 L2.35 7.70 L2.35 7.55 L2.33 7.40 L2.29 7.25 L2.19 7.08 L2.00 6.89 L1.67 6.65 L1.32 6.40 L1.08 6.14 L0.97 5.92 L0.96 5.71 L1.00 5.52 L1.05 5.33 L1.12 5.15 L1.20 4.97 L1.28 4.79 L1.36 4.62 L1.45 4.45 L1.55 4.28 L1.65 4.11 L1.75 3.94 L1.86 3.78 L1.97 3.62 L2.09 3.47 L2.22 3.32 L2.35 3.18 L2.50 3.05 L2.68 2.96 L2.93 2.93 L3.27 3.02 L3.67 3.19 L4.03 3.36 L4.30 3.43 L4.49 3.43 L4.65 3.39 L4.79 3.33 L4.92 3.25 L5.05 3.18 L5.17 3.11 L5.30 3.03 L5.43 2.96 L5.56 2.88 L5.68 2.79 L5.80 2.68 L5.89 2.51 L5.96 2.24 L6.00 1.85 L6.05 1.41 L6.14 1.08 L6.29 0.87 L6.46 0.76 L6.65 0.70 L6.84 0.65 L7.03 0.62 L7.22 0.59 L7.42 0.57 L7.61 0.56 L7.80 0.55 L8.00 0.55 L8.20 0.55 L8.39 0.56 L8.58 0.57 L8.78 0.59 L8.97 0.62 L9.16 0.65 L9.35 0.70 L9.54 0.76 L9.71 0.87 L9.86 1.08 L9.95 1.41 L10.00 1.85 L10.04 2.24 L10.11 2.51 L10.20 2.68 L10.32 2.79 L10.44 2.88 L10.57 2.96 L10.70 3.03 L10.83 3.11 L10.95 3.18 L11.08 3.25 L11.21 3.33 L11.35 3.39 L11.51 3.43 L11.70 3.43 L11.97 3.36 L12.33 3.19 L12.73 3.02 L13.07 2.93 L13.32 2.96 L13.50 3.05 L13.65 3.18 L13.78 3.32 L13.91 3.47 L14.03 3.62 L14.14 3.78 L14.25 3.94 L14.35 4.11 L14.45 4.28 L14.55 4.45 L14.64 4.62 L14.72 4.79 L14.80 4.97 L14.88 5.15 L14.95 5.33 L15.00 5.52 L15.04 5.71 L15.03 5.92 L14.92 6.14 L14.68 6.40 L14.33 6.65 L14.00 6.89 L13.81 7.08 L13.71 7.25 L13.67 7.40 L13.65 7.55 L13.65 7.70 L13.65 7.85Z"/><circle cx="8" cy="8" r="2.650"/></svg></div><svg style="left:-959px;top:-611px" width="1909" height="1018" viewBox="0 0 1909 1018"><path d="M1015 944.6H1633.500M1015 903.7H1633.500M1015 862.8H1633.500M1015 821.9H1633.500M1015 781H1633.500M1015 740.1H1633.500M1015 699.2H1633.500M1025 666V944.500M1039.4 666V954.500M1126.9 666V954.500M1214.3 666V954.500M1301.8 666V954.500M1389.2 666V954.500M1476.7 666V954.500M1564.2 666V954.500" fill="none" stroke="#EEF0F3" stroke-width="1"/><text x="1005.500" y="948.2" font-size="10.200" fill="#6A6F75" text-anchor="end">0</text><text x="1005.500" y="907.3" font-size="10.200" fill="#6A6F75" text-anchor="end">5</text><text x="1005.500" y="866.4" font-size="10.200" fill="#6A6F75" text-anchor="end">10</text><text x="1005.500" y="825.5" font-size="10.200" fill="#6A6F75" text-anchor="end">15</text><text x="1005.500" y="784.6" font-size="10.200" fill="#6A6F75" text-anchor="end">20</text><text x="1005.500" y="743.7" font-size="10.200" fill="#6A6F75" text-anchor="end">25</text><text x="1005.500" y="702.8" font-size="10.200" fill="#6A6F75" text-anchor="end">30</text><text x="1039.4" y="973.800" font-size="10" fill="#6A6F75" text-anchor="middle">2025-05-29 12:00</text><text x="1126.9" y="973.800" font-size="10" fill="#6A6F75" text-anchor="middle">2025-05-30 12:00</text><text x="1214.3" y="973.800" font-size="10" fill="#6A6F75" text-anchor="middle">2025-05-31 12:00</text><text x="1301.8" y="973.800" font-size="10" fill="#6A6F75" text-anchor="middle">2025-06-01 12:00</text><text x="1389.2" y="973.800" font-size="10" fill="#6A6F75" text-anchor="middle">2025-06-02 12:00</text><text x="1476.7" y="973.800" font-size="10" fill="#6A6F75" text-anchor="middle">2025-06-03 12:00</text><text x="1564.2" y="973.800" font-size="10" fill="#6A6F75" text-anchor="middle">2025-06-04 12:00</text><text x="1329.200" y="991.800" font-size="12" font-weight="700" fill="#2A3947" text-anchor="middle" textLength="84" lengthAdjust="spacingAndGlyphs">per 60 minutes</text><path d="M1024.7 903.6 L1028.3 780.9 L1032 723.6 L1035.6 887.2 L1039.3 862.7 L1042.9 895.4 L1046.6 928.1 L1050.2 920 L1053.9 936.3 L1057.5 944.5 L1061.2 944.5 L1064.8 944.5 L1068.4 944.5 L1072.1 944.5 L1075.7 936.3 L1079.4 936.3 L1083 928.1 L1086.7 887.2 L1090.3 862.7 L1094 821.8 L1097.6 813.6 L1101.2 772.7 L1104.9 748.2 L1108.5 715.5 L1112.2 723.6 L1115.8 723.6 L1119.5 772.7 L1123.1 830 L1126.8 895.4 L1130.4 911.8 L1134 928.1 L1137.7 928.1 L1141.3 936.3 L1145 944.5 L1148.6 936.3 L1152.3 936.3 L1155.9 944.5 L1159.6 936.3 L1163.2 911.8 L1166.9 903.6 L1170.5 895.4 L1174.1 879.1 L1177.8 830 L1181.4 854.5 L1185.1 797.3 L1188.7 715.5 L1192.4 813.6 L1196 715.5 L1199.7 772.7 L1203.3 780.9 L1207 813.6 L1210.6 830 L1214.2 862.7 L1217.9 920 L1221.5 911.8 L1225.2 928.1 L1228.8 944.5 L1232.5 944.5 L1236.1 944.5 L1239.8 944.5 L1243.4 936.3 L1247 911.8 L1250.7 920 L1254.3 920 L1258 879.1 L1261.6 887.2 L1265.3 895.4 L1268.9 789.1 L1272.6 813.6 L1276.2 723.6 L1279.9 797.3 L1283.5 723.6 L1287.1 764.5 L1290.8 772.7 L1294.4 870.9 L1298.1 756.4 L1301.7 903.6 L1305.4 903.6 L1309 928.1 L1312.7 911.8 L1316.3 944.5 L1319.9 944.5 L1323.6 944.5 L1327.2 944.5 L1330.9 936.3 L1334.5 944.5 L1338.2 928.1 L1341.8 936.3 L1345.5 879.1 L1349.1 846.3 L1352.8 830 L1356.4 821.8 L1360 862.7 L1363.7 748.2 L1367.3 682.7 L1371 715.5 L1374.6 740 L1378.3 838.2 L1381.9 813.6 L1385.6 821.8 L1389.2 870.9 L1392.8 936.3 L1396.5 936.3 L1400.1 936.3 L1403.8 944.5 L1407.4 936.3 L1411.1 936.3 L1414.7 944.5 L1418.4 920 L1422 928.1 L1425.7 911.8 L1429.3 887.2 L1432.9 879.1 L1436.6 911.8 L1440.2 870.9 L1443.9 887.2 L1447.5 748.2 L1451.2 772.7 L1454.8 789.1 L1458.5 666.4 L1462.1 797.3 L1465.7 756.4 L1469.4 830 L1473 813.6 L1476.7 846.3 L1480.3 920 L1484 936.3 L1487.6 936.3 L1491.3 944.5 L1494.9 944.5 L1498.6 944.5 L1502.2 944.5 L1505.8 936.3 L1509.5 928.1 L1513.1 936.3 L1516.8 936.3 L1520.4 903.6 L1524.1 887.2 L1527.7 862.7 L1531.4 813.6 L1535 789.1 L1538.6 740 L1542.3 731.8 L1545.9 748.2 L1549.6 748.2 L1553.2 813.6 L1556.9 756.4 L1560.5 813.6 L1564.2 903.6 L1567.8 903.6 L1571.5 928.1 L1575.1 944.5 L1578.7 936.3 L1582.4 936.3 L1586 936.3 L1589.7 944.5 L1593.3 944.5 L1597 936.3 L1600.6 944.5 L1604.3 920 L1607.9 903.6 L1611.5 903.6 L1615.2 879.1 L1618.8 813.6 L1622.5 805.4 L1626.1 723.6 L1629.8 666.4 L1633.4 748.2 L1633.4 944.5 L1024.7 944.5Z" fill="#54B399" fill-opacity="0.500"/><path d="M1024.7 903.6 L1028.3 780.9 L1032 723.6 L1035.6 887.2 L1039.3 862.7 L1042.9 895.4 L1046.6 928.1 L1050.2 920 L1053.9 936.3 L1057.5 944.5 L1061.2 944.5 L1064.8 944.5 L1068.4 944.5 L1072.1 944.5 L1075.7 936.3 L1079.4 936.3 L1083 928.1 L1086.7 887.2 L1090.3 862.7 L1094 821.8 L1097.6 813.6 L1101.2 772.7 L1104.9 748.2 L1108.5 715.5 L1112.2 723.6 L1115.8 723.6 L1119.5 772.7 L1123.1 830 L1126.8 895.4 L1130.4 911.8 L1134 928.1 L1137.7 928.1 L1141.3 936.3 L1145 944.5 L1148.6 936.3 L1152.3 936.3 L1155.9 944.5 L1159.6 936.3 L1163.2 911.8 L1166.9 903.6 L1170.5 895.4 L1174.1 879.1 L1177.8 830 L1181.4 854.5 L1185.1 797.3 L1188.7 715.5 L1192.4 813.6 L1196 715.5 L1199.7 772.7 L1203.3 780.9 L1207 813.6 L1210.6 830 L1214.2 862.7 L1217.9 920 L1221.5 911.8 L1225.2 928.1 L1228.8 944.5 L1232.5 944.5 L1236.1 944.5 L1239.8 944.5 L1243.4 936.3 L1247 911.8 L1250.7 920 L1254.3 920 L1258 879.1 L1261.6 887.2 L1265.3 895.4 L1268.9 789.1 L1272.6 813.6 L1276.2 723.6 L1279.9 797.3 L1283.5 723.6 L1287.1 764.5 L1290.8 772.7 L1294.4 870.9 L1298.1 756.4 L1301.7 903.6 L1305.4 903.6 L1309 928.1 L1312.7 911.8 L1316.3 944.5 L1319.9 944.5 L1323.6 944.5 L1327.2 944.5 L1330.9 936.3 L1334.5 944.5 L1338.2 928.1 L1341.8 936.3 L1345.5 879.1 L1349.1 846.3 L1352.8 830 L1356.4 821.8 L1360 862.7 L1363.7 748.2 L1367.3 682.7 L1371 715.5 L1374.6 740 L1378.3 838.2 L1381.9 813.6 L1385.6 821.8 L1389.2 870.9 L1392.8 936.3 L1396.5 936.3 L1400.1 936.3 L1403.8 944.5 L1407.4 936.3 L1411.1 936.3 L1414.7 944.5 L1418.4 920 L1422 928.1 L1425.7 911.8 L1429.3 887.2 L1432.9 879.1 L1436.6 911.8 L1440.2 870.9 L1443.9 887.2 L1447.5 748.2 L1451.2 772.7 L1454.8 789.1 L1458.5 666.4 L1462.1 797.3 L1465.7 756.4 L1469.4 830 L1473 813.6 L1476.7 846.3 L1480.3 920 L1484 936.3 L1487.6 936.3 L1491.3 944.5 L1494.9 944.5 L1498.6 944.5 L1502.2 944.5 L1505.8 936.3 L1509.5 928.1 L1513.1 936.3 L1516.8 936.3 L1520.4 903.6 L1524.1 887.2 L1527.7 862.7 L1531.4 813.6 L1535 789.1 L1538.6 740 L1542.3 731.8 L1545.9 748.2 L1549.6 748.2 L1553.2 813.6 L1556.9 756.4 L1560.5 813.6 L1564.2 903.6 L1567.8 903.6 L1571.5 928.1 L1575.1 944.5 L1578.7 936.3 L1582.4 936.3 L1586 936.3 L1589.7 944.5 L1593.3 944.5 L1597 936.3 L1600.6 944.5 L1604.3 920 L1607.9 903.6 L1611.5 903.6 L1615.2 879.1 L1618.8 813.6 L1622.5 805.4 L1626.1 723.6 L1629.8 666.4 L1633.4 748.2" fill="none" stroke="#54B399" stroke-width="1" stroke-linejoin="round"/><path d="M1024.7 936.3 L1028.3 879.1 L1032 870.9 L1035.6 944.5 L1039.3 920 L1042.9 936.3 L1046.6 936.3 L1050.2 928.1 L1053.9 944.5 L1057.5 944.5 L1061.2 944.5 L1064.8 944.5 L1068.4 944.5 L1072.1 944.5 L1075.7 944.5 L1079.4 944.5 L1083 944.5 L1086.7 928.1 L1090.3 903.6 L1094 936.3 L1097.6 920 L1101.2 887.2 L1104.9 862.7 L1108.5 879.1 L1112.2 846.3 L1115.8 821.8 L1119.5 854.5 L1123.1 920 L1126.8 936.3 L1130.4 936.3 L1134 936.3 L1137.7 936.3 L1141.3 936.3 L1145 944.5 L1148.6 944.5 L1152.3 944.5 L1155.9 944.5 L1159.6 936.3 L1163.2 936.3 L1166.9 928.1 L1170.5 928.1 L1174.1 920 L1177.8 911.8 L1181.4 911.8 L1185.1 854.5 L1188.7 838.2 L1192.4 895.4 L1196 830 L1199.7 887.2 L1203.3 862.7 L1207 870.9 L1210.6 911.8 L1214.2 920 L1217.9 928.1 L1221.5 936.3 L1225.2 936.3 L1228.8 944.5 L1232.5 944.5 L1236.1 944.5 L1239.8 944.5 L1243.4 944.5 L1247 936.3 L1250.7 944.5 L1254.3 944.5 L1258 920 L1261.6 936.3 L1265.3 936.3 L1268.9 887.2 L1272.6 903.6 L1276.2 846.3 L1279.9 854.5 L1283.5 846.3 L1287.1 911.8 L1290.8 887.2 L1294.4 920 L1298.1 895.4 L1301.7 944.5 L1305.4 928.1 L1309 944.5 L1312.7 944.5 L1316.3 944.5 L1319.9 944.5 L1323.6 944.5 L1327.2 944.5 L1330.9 944.5 L1334.5 944.5 L1338.2 944.5 L1341.8 944.5 L1345.5 911.8 L1349.1 903.6 L1352.8 903.6 L1356.4 887.2 L1360 920 L1363.7 838.2 L1367.3 854.5 L1371 846.3 L1374.6 862.7 L1378.3 903.6 L1381.9 887.2 L1385.6 887.2 L1389.2 928.1 L1392.8 944.5 L1396.5 936.3 L1400.1 944.5 L1403.8 944.5 L1407.4 944.5 L1411.1 944.5 L1414.7 944.5 L1418.4 928.1 L1422 928.1 L1425.7 920 L1429.3 920 L1432.9 936.3 L1436.6 936.3 L1440.2 911.8 L1443.9 936.3 L1447.5 895.4 L1451.2 895.4 L1454.8 911.8 L1458.5 854.5 L1462.1 895.4 L1465.7 846.3 L1469.4 920 L1473 895.4 L1476.7 911.8 L1480.3 928.1 L1484 944.5 L1487.6 936.3 L1491.3 944.5 L1494.9 944.5 L1498.6 944.5 L1502.2 944.5 L1505.8 936.3 L1509.5 936.3 L1513.1 944.5 L1516.8 936.3 L1520.4 920 L1524.1 911.8 L1527.7 928.1 L1531.4 870.9 L1535 870.9 L1538.6 870.9 L1542.3 838.2 L1545.9 838.2 L1549.6 887.2 L1553.2 887.2 L1556.9 870.9 L1560.5 879.1 L1564.2 920 L1567.8 928.1 L1571.5 936.3 L1575.1 944.5 L1578.7 936.3 L1582.4 936.3 L1586 944.5 L1589.7 944.5 L1593.3 944.5 L1597 944.5 L1600.6 944.5 L1604.3 944.5 L1607.9 936.3 L1611.5 928.1 L1615.2 903.6 L1618.8 903.6 L1622.5 911.8 L1626.1 862.7 L1629.8 830 L1633.4 870.9 L1633.4 944.5 L1024.7 944.5Z" fill="#54B399" fill-opacity="0.500"/><path d="M1024.7 936.3 L1028.3 879.1 L1032 870.9 L1035.6 944.5 L1039.3 920 L1042.9 936.3 L1046.6 936.3 L1050.2 928.1 L1053.9 944.5 L1057.5 944.5 L1061.2 944.5 L1064.8 944.5 L1068.4 944.5 L1072.1 944.5 L1075.7 944.5 L1079.4 944.5 L1083 944.5 L1086.7 928.1 L1090.3 903.6 L1094 936.3 L1097.6 920 L1101.2 887.2 L1104.9 862.7 L1108.5 879.1 L1112.2 846.3 L1115.8 821.8 L1119.5 854.5 L1123.1 920 L1126.8 936.3 L1130.4 936.3 L1134 936.3 L1137.7 936.3 L1141.3 936.3 L1145 944.5 L1148.6 944.5 L1152.3 944.5 L1155.9 944.5 L1159.6 936.3 L1163.2 936.3 L1166.9 928.1 L1170.5 928.1 L1174.1 920 L1177.8 911.8 L1181.4 911.8 L1185.1 854.5 L1188.7 838.2 L1192.4 895.4 L1196 830 L1199.7 887.2 L1203.3 862.7 L1207 870.9 L1210.6 911.8 L1214.2 920 L1217.9 928.1 L1221.5 936.3 L1225.2 936.3 L1228.8 944.5 L1232.5 944.5 L1236.1 944.5 L1239.8 944.5 L1243.4 944.5 L1247 936.3 L1250.7 944.5 L1254.3 944.5 L1258 920 L1261.6 936.3 L1265.3 936.3 L1268.9 887.2 L1272.6 903.6 L1276.2 846.3 L1279.9 854.5 L1283.5 846.3 L1287.1 911.8 L1290.8 887.2 L1294.4 920 L1298.1 895.4 L1301.7 944.5 L1305.4 928.1 L1309 944.5 L1312.7 944.5 L1316.3 944.5 L1319.9 944.5 L1323.6 944.5 L1327.2 944.5 L1330.9 944.5 L1334.5 944.5 L1338.2 944.5 L1341.8 944.5 L1345.5 911.8 L1349.1 903.6 L1352.8 903.6 L1356.4 887.2 L1360 920 L1363.7 838.2 L1367.3 854.5 L1371 846.3 L1374.6 862.7 L1378.3 903.6 L1381.9 887.2 L1385.6 887.2 L1389.2 928.1 L1392.8 944.5 L1396.5 936.3 L1400.1 944.5 L1403.8 944.5 L1407.4 944.5 L1411.1 944.5 L1414.7 944.5 L1418.4 928.1 L1422 928.1 L1425.7 920 L1429.3 920 L1432.9 936.3 L1436.6 936.3 L1440.2 911.8 L1443.9 936.3 L1447.5 895.4 L1451.2 895.4 L1454.8 911.8 L1458.5 854.5 L1462.1 895.4 L1465.7 846.3 L1469.4 920 L1473 895.4 L1476.7 911.8 L1480.3 928.1 L1484 944.5 L1487.6 936.3 L1491.3 944.5 L1494.9 944.5 L1498.6 944.5 L1502.2 944.5 L1505.8 936.3 L1509.5 936.3 L1513.1 944.5 L1516.8 936.3 L1520.4 920 L1524.1 911.8 L1527.7 928.1 L1531.4 870.9 L1535 870.9 L1538.6 870.9 L1542.3 838.2 L1545.9 838.2 L1549.6 887.2 L1553.2 887.2 L1556.9 870.9 L1560.5 879.1 L1564.2 920 L1567.8 928.1 L1571.5 936.3 L1575.1 944.5 L1578.7 936.3 L1582.4 936.3 L1586 944.5 L1589.7 944.5 L1593.3 944.5 L1597 944.5 L1600.6 944.5 L1604.3 944.5 L1607.9 936.3 L1611.5 928.1 L1615.2 903.6 L1618.8 903.6 L1622.5 911.8 L1626.1 862.7 L1629.8 830 L1633.4 870.9" fill="none" stroke="#54B399" stroke-width="1" stroke-linejoin="round"/><path d="M1024.7 936.3 L1028.3 903.6 L1032 879.1 L1035.6 920 L1039.3 920 L1042.9 928.1 L1046.6 944.5 L1050.2 944.5 L1053.9 944.5 L1057.5 944.5 L1061.2 944.5 L1064.8 944.5 L1068.4 944.5 L1072.1 944.5 L1075.7 944.5 L1079.4 936.3 L1083 944.5 L1086.7 911.8 L1090.3 928.1 L1094 887.2 L1097.6 887.2 L1101.2 895.4 L1104.9 895.4 L1108.5 846.3 L1112.2 854.5 L1115.8 879.1 L1119.5 895.4 L1123.1 879.1 L1126.8 920 L1130.4 920 L1134 944.5 L1137.7 936.3 L1141.3 944.5 L1145 944.5 L1148.6 944.5 L1152.3 944.5 L1155.9 944.5 L1159.6 944.5 L1163.2 920 L1166.9 936.3 L1170.5 936.3 L1174.1 911.8 L1177.8 911.8 L1181.4 920 L1185.1 895.4 L1188.7 895.4 L1192.4 870.9 L1196 903.6 L1199.7 870.9 L1203.3 920 L1207 920 L1210.6 887.2 L1214.2 920 L1217.9 944.5 L1221.5 944.5 L1225.2 944.5 L1228.8 944.5 L1232.5 944.5 L1236.1 944.5 L1239.8 944.5 L1243.4 936.3 L1247 920 L1250.7 928.1 L1254.3 936.3 L1258 920 L1261.6 936.3 L1265.3 928.1 L1268.9 903.6 L1272.6 920 L1276.2 870.9 L1279.9 928.1 L1283.5 879.1 L1287.1 830 L1290.8 895.4 L1294.4 920 L1298.1 846.3 L1301.7 936.3 L1305.4 936.3 L1309 928.1 L1312.7 911.8 L1316.3 944.5 L1319.9 944.5 L1323.6 944.5 L1327.2 944.5 L1330.9 944.5 L1334.5 944.5 L1338.2 944.5 L1341.8 936.3 L1345.5 928.1 L1349.1 936.3 L1352.8 903.6 L1356.4 903.6 L1360 920 L1363.7 895.4 L1367.3 846.3 L1371 920 L1374.6 887.2 L1378.3 920 L1381.9 911.8 L1385.6 911.8 L1389.2 920 L1392.8 936.3 L1396.5 944.5 L1400.1 944.5 L1403.8 944.5 L1407.4 944.5 L1411.1 936.3 L1414.7 944.5 L1418.4 944.5 L1422 944.5 L1425.7 944.5 L1429.3 936.3 L1432.9 911.8 L1436.6 936.3 L1440.2 911.8 L1443.9 928.1 L1447.5 846.3 L1451.2 895.4 L1454.8 854.5 L1458.5 838.2 L1462.1 895.4 L1465.7 903.6 L1469.4 920 L1473 911.8 L1476.7 911.8 L1480.3 936.3 L1484 944.5 L1487.6 944.5 L1491.3 944.5 L1494.9 944.5 L1498.6 944.5 L1502.2 944.5 L1505.8 944.5 L1509.5 944.5 L1513.1 936.3 L1516.8 944.5 L1520.4 944.5 L1524.1 936.3 L1527.7 903.6 L1531.4 895.4 L1535 903.6 L1538.6 887.2 L1542.3 870.9 L1545.9 887.2 L1549.6 862.7 L1553.2 879.1 L1556.9 887.2 L1560.5 903.6 L1564.2 944.5 L1567.8 920 L1571.5 944.5 L1575.1 944.5 L1578.7 944.5 L1582.4 944.5 L1586 944.5 L1589.7 944.5 L1593.3 944.5 L1597 944.5 L1600.6 944.5 L1604.3 936.3 L1607.9 936.3 L1611.5 936.3 L1615.2 920 L1618.8 903.6 L1622.5 879.1 L1626.1 887.2 L1629.8 879.1 L1633.4 895.4 L1633.4 944.5 L1024.7 944.5Z" fill="#6092C0" fill-opacity="0.500"/><path d="M1024.7 936.3 L1028.3 903.6 L1032 879.1 L1035.6 920 L1039.3 920 L1042.9 928.1 L1046.6 944.5 L1050.2 944.5 L1053.9 944.5 L1057.5 944.5 L1061.2 944.5 L1064.8 944.5 L1068.4 944.5 L1072.1 944.5 L1075.7 944.5 L1079.4 936.3 L1083 944.5 L1086.7 911.8 L1090.3 928.1 L1094 887.2 L1097.6 887.2 L1101.2 895.4 L1104.9 895.4 L1108.5 846.3 L1112.2 854.5 L1115.8 879.1 L1119.5 895.4 L1123.1 879.1 L1126.8 920 L1130.4 920 L1134 944.5 L1137.7 936.3 L1141.3 944.5 L1145 944.5 L1148.6 944.5 L1152.3 944.5 L1155.9 944.5 L1159.6 944.5 L1163.2 920 L1166.9 936.3 L1170.5 936.3 L1174.1 911.8 L1177.8 911.8 L1181.4 920 L1185.1 895.4 L1188.7 895.4 L1192.4 870.9 L1196 903.6 L1199.7 870.9 L1203.3 920 L1207 920 L1210.6 887.2 L1214.2 920 L1217.9 944.5 L1221.5 944.5 L1225.2 944.5 L1228.8 944.5 L1232.5 944.5 L1236.1 944.5 L1239.8 944.5 L1243.4 936.3 L1247 920 L1250.7 928.1 L1254.3 936.3 L1258 920 L1261.6 936.3 L1265.3 928.1 L1268.9 903.6 L1272.6 920 L1276.2 870.9 L1279.9 928.1 L1283.5 879.1 L1287.1 830 L1290.8 895.4 L1294.4 920 L1298.1 846.3 L1301.7 936.3 L1305.4 936.3 L1309 928.1 L1312.7 911.8 L1316.3 944.5 L1319.9 944.5 L1323.6 944.5 L1327.2 944.5 L1330.9 944.5 L1334.5 944.5 L1338.2 944.5 L1341.8 936.3 L1345.5 928.1 L1349.1 936.3 L1352.8 903.6 L1356.4 903.6 L1360 920 L1363.7 895.4 L1367.3 846.3 L1371 920 L1374.6 887.2 L1378.3 920 L1381.9 911.8 L1385.6 911.8 L1389.2 920 L1392.8 936.3 L1396.5 944.5 L1400.1 944.5 L1403.8 944.5 L1407.4 944.5 L1411.1 936.3 L1414.7 944.5 L1418.4 944.5 L1422 944.5 L1425.7 944.5 L1429.3 936.3 L1432.9 911.8 L1436.6 936.3 L1440.2 911.8 L1443.9 928.1 L1447.5 846.3 L1451.2 895.4 L1454.8 854.5 L1458.5 838.2 L1462.1 895.4 L1465.7 903.6 L1469.4 920 L1473 911.8 L1476.7 911.8 L1480.3 936.3 L1484 944.5 L1487.6 944.5 L1491.3 944.5 L1494.9 944.5 L1498.6 944.5 L1502.2 944.5 L1505.8 944.5 L1509.5 944.5 L1513.1 936.3 L1516.8 944.5 L1520.4 944.5 L1524.1 936.3 L1527.7 903.6 L1531.4 895.4 L1535 903.6 L1538.6 887.2 L1542.3 870.9 L1545.9 887.2 L1549.6 862.7 L1553.2 879.1 L1556.9 887.2 L1560.5 903.6 L1564.2 944.5 L1567.8 920 L1571.5 944.5 L1575.1 944.5 L1578.7 944.5 L1582.4 944.5 L1586 944.5 L1589.7 944.5 L1593.3 944.5 L1597 944.5 L1600.6 944.5 L1604.3 936.3 L1607.9 936.3 L1611.5 936.3 L1615.2 920 L1618.8 903.6 L1622.5 879.1 L1626.1 887.2 L1629.8 879.1 L1633.4 895.4" fill="none" stroke="#6092C0" stroke-width="1" stroke-linejoin="round"/><path d="M1024.7 920 L1028.3 887.2 L1032 862.7 L1035.6 911.8 L1039.3 911.8 L1042.9 920 L1046.6 936.3 L1050.2 936.3 L1053.9 936.3 L1057.5 944.5 L1061.2 944.5 L1064.8 944.5 L1068.4 944.5 L1072.1 944.5 L1075.7 936.3 L1079.4 944.5 L1083 928.1 L1086.7 936.3 L1090.3 920 L1094 887.2 L1097.6 895.4 L1101.2 879.1 L1104.9 879.1 L1108.5 879.1 L1112.2 911.8 L1115.8 911.8 L1119.5 911.8 L1123.1 920 L1126.8 928.1 L1130.4 944.5 L1134 936.3 L1137.7 944.5 L1141.3 944.5 L1145 944.5 L1148.6 936.3 L1152.3 936.3 L1155.9 944.5 L1159.6 944.5 L1163.2 944.5 L1166.9 928.1 L1170.5 920 L1174.1 936.3 L1177.8 895.4 L1181.4 911.8 L1185.1 936.3 L1188.7 870.9 L1192.4 936.3 L1196 870.9 L1199.7 903.6 L1203.3 887.2 L1207 911.8 L1210.6 920 L1214.2 911.8 L1217.9 936.3 L1221.5 920 L1225.2 936.3 L1228.8 944.5 L1232.5 944.5 L1236.1 944.5 L1239.8 944.5 L1243.4 944.5 L1247 944.5 L1250.7 936.3 L1254.3 928.1 L1258 928.1 L1261.6 903.6 L1265.3 920 L1268.9 887.2 L1272.6 879.1 L1276.2 895.4 L1279.9 903.6 L1283.5 887.2 L1287.1 911.8 L1290.8 879.1 L1294.4 920 L1298.1 903.6 L1301.7 911.8 L1305.4 928.1 L1309 944.5 L1312.7 944.5 L1316.3 944.5 L1319.9 944.5 L1323.6 944.5 L1327.2 944.5 L1330.9 936.3 L1334.5 944.5 L1338.2 928.1 L1341.8 944.5 L1345.5 928.1 L1349.1 895.4 L1352.8 911.8 L1356.4 920 L1360 911.8 L1363.7 903.6 L1367.3 870.9 L1371 838.2 L1374.6 879.1 L1378.3 903.6 L1381.9 903.6 L1385.6 911.8 L1389.2 911.8 L1392.8 944.5 L1396.5 944.5 L1400.1 936.3 L1403.8 944.5 L1407.4 936.3 L1411.1 944.5 L1414.7 944.5 L1418.4 936.3 L1422 944.5 L1425.7 936.3 L1429.3 920 L1432.9 920 L1436.6 928.1 L1440.2 936.3 L1443.9 911.8 L1447.5 895.4 L1451.2 870.9 L1454.8 911.8 L1458.5 862.7 L1462.1 895.4 L1465.7 895.4 L1469.4 879.1 L1473 895.4 L1476.7 911.8 L1480.3 944.5 L1484 936.3 L1487.6 944.5 L1491.3 944.5 L1494.9 944.5 L1498.6 944.5 L1502.2 944.5 L1505.8 944.5 L1509.5 936.3 L1513.1 944.5 L1516.8 944.5 L1520.4 928.1 L1524.1 928.1 L1527.7 920 L1531.4 936.3 L1535 903.6 L1538.6 870.9 L1542.3 911.8 L1545.9 911.8 L1549.6 887.2 L1553.2 936.3 L1556.9 887.2 L1560.5 920 L1564.2 928.1 L1567.8 944.5 L1571.5 936.3 L1575.1 944.5 L1578.7 944.5 L1582.4 944.5 L1586 936.3 L1589.7 944.5 L1593.3 944.5 L1597 936.3 L1600.6 944.5 L1604.3 928.1 L1607.9 920 L1611.5 928.1 L1615.2 944.5 L1618.8 895.4 L1622.5 903.6 L1626.1 862.7 L1629.8 846.3 L1633.4 870.9 L1633.4 944.5 L1024.7 944.5Z" fill="#D36086" fill-opacity="0.500"/><path d="M1024.7 920 L1028.3 887.2 L1032 862.7 L1035.6 911.8 L1039.3 911.8 L1042.9 920 L1046.6 936.3 L1050.2 936.3 L1053.9 936.3 L1057.5 944.5 L1061.2 944.5 L1064.8 944.5 L1068.4 944.5 L1072.1 944.5 L1075.7 936.3 L1079.4 944.5 L1083 928.1 L1086.7 936.3 L1090.3 920 L1094 887.2 L1097.6 895.4 L1101.2 879.1 L1104.9 879.1 L1108.5 879.1 L1112.2 911.8 L1115.8 911.8 L1119.5 911.8 L1123.1 920 L1126.8 928.1 L1130.4 944.5 L1134 936.3 L1137.7 944.5 L1141.3 944.5 L1145 944.5 L1148.6 936.3 L1152.3 936.3 L1155.9 944.5 L1159.6 944.5 L1163.2 944.5 L1166.9 928.1 L1170.5 920 L1174.1 936.3 L1177.8 895.4 L1181.4 911.8 L1185.1 936.3 L1188.7 870.9 L1192.4 936.3 L1196 870.9 L1199.7 903.6 L1203.3 887.2 L1207 911.8 L1210.6 920 L1214.2 911.8 L1217.9 936.3 L1221.5 920 L1225.2 936.3 L1228.8 944.5 L1232.5 944.5 L1236.1 944.5 L1239.8 944.5 L1243.4 944.5 L1247 944.5 L1250.7 936.3 L1254.3 928.1 L1258 928.1 L1261.6 903.6 L1265.3 920 L1268.9 887.2 L1272.6 879.1 L1276.2 895.4 L1279.9 903.6 L1283.5 887.2 L1287.1 911.8 L1290.8 879.1 L1294.4 920 L1298.1 903.6 L1301.7 911.8 L1305.4 928.1 L1309 944.5 L1312.7 944.5 L1316.3 944.5 L1319.9 944.5 L1323.6 944.5 L1327.2 944.5 L1330.9 936.3 L1334.5 944.5 L1338.2 928.1 L1341.8 944.5 L1345.5 928.1 L1349.1 895.4 L1352.8 911.8 L1356.4 920 L1360 911.8 L1363.7 903.6 L1367.3 870.9 L1371 838.2 L1374.6 879.1 L1378.3 903.6 L1381.9 903.6 L1385.6 911.8 L1389.2 911.8 L1392.8 944.5 L1396.5 944.5 L1400.1 936.3 L1403.8 944.5 L1407.4 936.3 L1411.1 944.5 L1414.7 944.5 L1418.4 936.3 L1422 944.5 L1425.7 936.3 L1429.3 920 L1432.9 920 L1436.6 928.1 L1440.2 936.3 L1443.9 911.8 L1447.5 895.4 L1451.2 870.9 L1454.8 911.8 L1458.5 862.7 L1462.1 895.4 L1465.7 895.4 L1469.4 879.1 L1473 895.4 L1476.7 911.8 L1480.3 944.5 L1484 936.3 L1487.6 944.5 L1491.3 944.5 L1494.9 944.5 L1498.6 944.5 L1502.2 944.5 L1505.8 944.5 L1509.5 936.3 L1513.1 944.5 L1516.8 944.5 L1520.4 928.1 L1524.1 928.1 L1527.7 920 L1531.4 936.3 L1535 903.6 L1538.6 870.9 L1542.3 911.8 L1545.9 911.8 L1549.6 887.2 L1553.2 936.3 L1556.9 887.2 L1560.5 920 L1564.2 928.1 L1567.8 944.5 L1571.5 936.3 L1575.1 944.5 L1578.7 944.5 L1582.4 944.5 L1586 936.3 L1589.7 944.5 L1593.3 944.5 L1597 936.3 L1600.6 944.5 L1604.3 928.1 L1607.9 920 L1611.5 928.1 L1615.2 944.5 L1618.8 895.4 L1622.5 903.6 L1626.1 862.7 L1629.8 846.3 L1633.4 870.9" fill="none" stroke="#D36086" stroke-width="1" stroke-linejoin="round"/><g fill="#fff" stroke="#54B399" stroke-width="0.800"><circle cx="1024.7" cy="903.6" r="1.200"/><circle cx="1028.3" cy="780.9" r="1.200"/><circle cx="1032" cy="723.6" r="1.200"/><circle cx="1035.6" cy="887.2" r="1.200"/><circle cx="1039.3" cy="862.7" r="1.200"/><circle cx="1042.9" cy="895.4" r="1.200"/><circle cx="1046.6" cy="928.1" r="1.200"/><circle cx="1050.2" cy="920" r="1.200"/><circle cx="1053.9" cy="936.3" r="1.200"/><circle cx="1057.5" cy="944.5" r="1.200"/><circle cx="1061.2" cy="944.5" r="1.200"/><circle cx="1064.8" cy="944.5" r="1.200"/><circle cx="1068.4" cy="944.5" r="1.200"/><circle cx="1072.1" cy="944.5" r="1.200"/><circle cx="1075.7" cy="936.3" r="1.200"/><circle cx="1079.4" cy="936.3" r="1.200"/><circle cx="1083" cy="928.1" r="1.200"/><circle cx="1086.7" cy="887.2" r="1.200"/><circle cx="1090.3" cy="862.7" r="1.200"/><circle cx="1094" cy="821.8" r="1.200"/><circle cx="1097.6" cy="813.6" r="1.200"/><circle cx="1101.2" cy="772.7" r="1.200"/><circle cx="1104.9" cy="748.2" r="1.200"/><circle cx="1108.5" cy="715.5" r="1.200"/><circle cx="1112.2" cy="723.6" r="1.200"/><circle cx="1115.8" cy="723.6" r="1.200"/><circle cx="1119.5" cy="772.7" r="1.200"/><circle cx="1123.1" cy="830" r="1.200"/><circle cx="1126.8" cy="895.4" r="1.200"/><circle cx="1130.4" cy="911.8" r="1.200"/><circle cx="1134" cy="928.1" r="1.200"/><circle cx="1137.7" cy="928.1" r="1.200"/><circle cx="1141.3" cy="936.3" r="1.200"/><circle cx="1145" cy="944.5" r="1.200"/><circle cx="1148.6" cy="936.3" r="1.200"/><circle cx="1152.3" cy="936.3" r="1.200"/><circle cx="1155.9" cy="944.5" r="1.200"/><circle cx="1159.6" cy="936.3" r="1.200"/><circle cx="1163.2" cy="911.8" r="1.200"/><circle cx="1166.9" cy="903.6" r="1.200"/><circle cx="1170.5" cy="895.4" r="1.200"/><circle cx="1174.1" cy="879.1" r="1.200"/><circle cx="1177.8" cy="830" r="1.200"/><circle cx="1181.4" cy="854.5" r="1.200"/><circle cx="1185.1" cy="797.3" r="1.200"/><circle cx="1188.7" cy="715.5" r="1.200"/><circle cx="1192.4" cy="813.6" r="1.200"/><circle cx="1196" cy="715.5" r="1.200"/><circle cx="1199.7" cy="772.7" r="1.200"/><circle cx="1203.3" cy="780.9" r="1.200"/><circle cx="1207" cy="813.6" r="1.200"/><circle cx="1210.6" cy="830" r="1.200"/><circle cx="1214.2" cy="862.7" r="1.200"/><circle cx="1217.9" cy="920" r="1.200"/><circle cx="1221.5" cy="911.8" r="1.200"/><circle cx="1225.2" cy="928.1" r="1.200"/><circle cx="1228.8" cy="944.5" r="1.200"/><circle cx="1232.5" cy="944.5" r="1.200"/><circle cx="1236.1" cy="944.5" r="1.200"/><circle cx="1239.8" cy="944.5" r="1.200"/><circle cx="1243.4" cy="936.3" r="1.200"/><circle cx="1247" cy="911.8" r="1.200"/><circle cx="1250.7" cy="920" r="1.200"/><circle cx="1254.3" cy="920" r="1.200"/><circle cx="1258" cy="879.1" r="1.200"/><circle cx="1261.6" cy="887.2" r="1.200"/><circle cx="1265.3" cy="895.4" r="1.200"/><circle cx="1268.9" cy="789.1" r="1.200"/><circle cx="1272.6" cy="813.6" r="1.200"/><circle cx="1276.2" cy="723.6" r="1.200"/><circle cx="1279.9" cy="797.3" r="1.200"/><circle cx="1283.5" cy="723.6" r="1.200"/><circle cx="1287.1" cy="764.5" r="1.200"/><circle cx="1290.8" cy="772.7" r="1.200"/><circle cx="1294.4" cy="870.9" r="1.200"/><circle cx="1298.1" cy="756.4" r="1.200"/><circle cx="1301.7" cy="903.6" r="1.200"/><circle cx="1305.4" cy="903.6" r="1.200"/><circle cx="1309" cy="928.1" r="1.200"/><circle cx="1312.7" cy="911.8" r="1.200"/><circle cx="1316.3" cy="944.5" r="1.200"/><circle cx="1319.9" cy="944.5" r="1.200"/><circle cx="1323.6" cy="944.5" r="1.200"/><circle cx="1327.2" cy="944.5" r="1.200"/><circle cx="1330.9" cy="936.3" r="1.200"/><circle cx="1334.5" cy="944.5" r="1.200"/><circle cx="1338.2" cy="928.1" r="1.200"/><circle cx="1341.8" cy="936.3" r="1.200"/><circle cx="1345.5" cy="879.1" r="1.200"/><circle cx="1349.1" cy="846.3" r="1.200"/><circle cx="1352.8" cy="830" r="1.200"/><circle cx="1356.4" cy="821.8" r="1.200"/><circle cx="1360" cy="862.7" r="1.200"/><circle cx="1363.7" cy="748.2" r="1.200"/><circle cx="1367.3" cy="682.7" r="1.200"/><circle cx="1371" cy="715.5" r="1.200"/><circle cx="1374.6" cy="740" r="1.200"/><circle cx="1378.3" cy="838.2" r="1.200"/><circle cx="1381.9" cy="813.6" r="1.200"/><circle cx="1385.6" cy="821.8" r="1.200"/><circle cx="1389.2" cy="870.9" r="1.200"/><circle cx="1392.8" cy="936.3" r="1.200"/><circle cx="1396.5" cy="936.3" r="1.200"/><circle cx="1400.1" cy="936.3" r="1.200"/><circle cx="1403.8" cy="944.5" r="1.200"/><circle cx="1407.4" cy="936.3" r="1.200"/><circle cx="1411.1" cy="936.3" r="1.200"/><circle cx="1414.7" cy="944.5" r="1.200"/><circle cx="1418.4" cy="920" r="1.200"/><circle cx="1422" cy="928.1" r="1.200"/><circle cx="1425.7" cy="911.8" r="1.200"/><circle cx="1429.3" cy="887.2" r="1.200"/><circle cx="1432.9" cy="879.1" r="1.200"/><circle cx="1436.6" cy="911.8" r="1.200"/><circle cx="1440.2" cy="870.9" r="1.200"/><circle cx="1443.9" cy="887.2" r="1.200"/><circle cx="1447.5" cy="748.2" r="1.200"/><circle cx="1451.2" cy="772.7" r="1.200"/><circle cx="1454.8" cy="789.1" r="1.200"/><circle cx="1458.5" cy="666.4" r="1.200"/><circle cx="1462.1" cy="797.3" r="1.200"/><circle cx="1465.7" cy="756.4" r="1.200"/><circle cx="1469.4" cy="830" r="1.200"/><circle cx="1473" cy="813.6" r="1.200"/><circle cx="1476.7" cy="846.3" r="1.200"/><circle cx="1480.3" cy="920" r="1.200"/><circle cx="1484" cy="936.3" r="1.200"/><circle cx="1487.6" cy="936.3" r="1.200"/><circle cx="1491.3" cy="944.5" r="1.200"/><circle cx="1494.9" cy="944.5" r="1.200"/><circle cx="1498.6" cy="944.5" r="1.200"/><circle cx="1502.2" cy="944.5" r="1.200"/><circle cx="1505.8" cy="936.3" r="1.200"/><circle cx="1509.5" cy="928.1" r="1.200"/><circle cx="1513.1" cy="936.3" r="1.200"/><circle cx="1516.8" cy="936.3" r="1.200"/><circle cx="1520.4" cy="903.6" r="1.200"/><circle cx="1524.1" cy="887.2" r="1.200"/><circle cx="1527.7" cy="862.7" r="1.200"/><circle cx="1531.4" cy="813.6" r="1.200"/><circle cx="1535" cy="789.1" r="1.200"/><circle cx="1538.6" cy="740" r="1.200"/><circle cx="1542.3" cy="731.8" r="1.200"/><circle cx="1545.9" cy="748.2" r="1.200"/><circle cx="1549.6" cy="748.2" r="1.200"/><circle cx="1553.2" cy="813.6" r="1.200"/><circle cx="1556.9" cy="756.4" r="1.200"/><circle cx="1560.5" cy="813.6" r="1.200"/><circle cx="1564.2" cy="903.6" r="1.200"/><circle cx="1567.8" cy="903.6" r="1.200"/><circle cx="1571.5" cy="928.1" r="1.200"/><circle cx="1575.1" cy="944.5" r="1.200"/><circle cx="1578.7" cy="936.3" r="1.200"/><circle cx="1582.4" cy="936.3" r="1.200"/><circle cx="1586" cy="936.3" r="1.200"/><circle cx="1589.7" cy="944.5" r="1.200"/><circle cx="1593.3" cy="944.5" r="1.200"/><circle cx="1597" cy="936.3" r="1.200"/><circle cx="1600.6" cy="944.5" r="1.200"/><circle cx="1604.3" cy="920" r="1.200"/><circle cx="1607.9" cy="903.6" r="1.200"/><circle cx="1611.5" cy="903.6" r="1.200"/><circle cx="1615.2" cy="879.1" r="1.200"/><circle cx="1618.8" cy="813.6" r="1.200"/><circle cx="1622.5" cy="805.4" r="1.200"/><circle cx="1626.1" cy="723.6" r="1.200"/><circle cx="1629.8" cy="666.4" r="1.200"/><circle cx="1633.4" cy="748.2" r="1.200"/></g><g fill="#fff" stroke="#54B399" stroke-width="0.800"><circle cx="1024.7" cy="936.3" r="1.200"/><circle cx="1028.3" cy="879.1" r="1.200"/><circle cx="1032" cy="870.9" r="1.200"/><circle cx="1035.6" cy="944.5" r="1.200"/><circle cx="1039.3" cy="920" r="1.200"/><circle cx="1042.9" cy="936.3" r="1.200"/><circle cx="1046.6" cy="936.3" r="1.200"/><circle cx="1050.2" cy="928.1" r="1.200"/><circle cx="1053.9" cy="944.5" r="1.200"/><circle cx="1057.5" cy="944.5" r="1.200"/><circle cx="1061.2" cy="944.5" r="1.200"/><circle cx="1064.8" cy="944.5" r="1.200"/><circle cx="1068.4" cy="944.5" r="1.200"/><circle cx="1072.1" cy="944.5" r="1.200"/><circle cx="1075.7" cy="944.5" r="1.200"/><circle cx="1079.4" cy="944.5" r="1.200"/><circle cx="1083" cy="944.5" r="1.200"/><circle cx="1086.7" cy="928.1" r="1.200"/><circle cx="1090.3" cy="903.6" r="1.200"/><circle cx="1094" cy="936.3" r="1.200"/><circle cx="1097.6" cy="920" r="1.200"/><circle cx="1101.2" cy="887.2" r="1.200"/><circle cx="1104.9" cy="862.7" r="1.200"/><circle cx="1108.5" cy="879.1" r="1.200"/><circle cx="1112.2" cy="846.3" r="1.200"/><circle cx="1115.8" cy="821.8" r="1.200"/><circle cx="1119.5" cy="854.5" r="1.200"/><circle cx="1123.1" cy="920" r="1.200"/><circle cx="1126.8" cy="936.3" r="1.200"/><circle cx="1130.4" cy="936.3" r="1.200"/><circle cx="1134" cy="936.3" r="1.200"/><circle cx="1137.7" cy="936.3" r="1.200"/><circle cx="1141.3" cy="936.3" r="1.200"/><circle cx="1145" cy="944.5" r="1.200"/><circle cx="1148.6" cy="944.5" r="1.200"/><circle cx="1152.3" cy="944.5" r="1.200"/><circle cx="1155.9" cy="944.5" r="1.200"/><circle cx="1159.6" cy="936.3" r="1.200"/><circle cx="1163.2" cy="936.3" r="1.200"/><circle cx="1166.9" cy="928.1" r="1.200"/><circle cx="1170.5" cy="928.1" r="1.200"/><circle cx="1174.1" cy="920" r="1.200"/><circle cx="1177.8" cy="911.8" r="1.200"/><circle cx="1181.4" cy="911.8" r="1.200"/><circle cx="1185.1" cy="854.5" r="1.200"/><circle cx="1188.7" cy="838.2" r="1.200"/><circle cx="1192.4" cy="895.4" r="1.200"/><circle cx="1196" cy="830" r="1.200"/><circle cx="1199.7" cy="887.2" r="1.200"/><circle cx="1203.3" cy="862.7" r="1.200"/><circle cx="1207" cy="870.9" r="1.200"/><circle cx="1210.6" cy="911.8" r="1.200"/><circle cx="1214.2" cy="920" r="1.200"/><circle cx="1217.9" cy="928.1" r="1.200"/><circle cx="1221.5" cy="936.3" r="1.200"/><circle cx="1225.2" cy="936.3" r="1.200"/><circle cx="1228.8" cy="944.5" r="1.200"/><circle cx="1232.5" cy="944.5" r="1.200"/><circle cx="1236.1" cy="944.5" r="1.200"/><circle cx="1239.8" cy="944.5" r="1.200"/><circle cx="1243.4" cy="944.5" r="1.200"/><circle cx="1247" cy="936.3" r="1.200"/><circle cx="1250.7" cy="944.5" r="1.200"/><circle cx="1254.3" cy="944.5" r="1.200"/><circle cx="1258" cy="920" r="1.200"/><circle cx="1261.6" cy="936.3" r="1.200"/><circle cx="1265.3" cy="936.3" r="1.200"/><circle cx="1268.9" cy="887.2" r="1.200"/><circle cx="1272.6" cy="903.6" r="1.200"/><circle cx="1276.2" cy="846.3" r="1.200"/><circle cx="1279.9" cy="854.5" r="1.200"/><circle cx="1283.5" cy="846.3" r="1.200"/><circle cx="1287.1" cy="911.8" r="1.200"/><circle cx="1290.8" cy="887.2" r="1.200"/><circle cx="1294.4" cy="920" r="1.200"/><circle cx="1298.1" cy="895.4" r="1.200"/><circle cx="1301.7" cy="944.5" r="1.200"/><circle cx="1305.4" cy="928.1" r="1.200"/><circle cx="1309" cy="944.5" r="1.200"/><circle cx="1312.7" cy="944.5" r="1.200"/><circle cx="1316.3" cy="944.5" r="1.200"/><circle cx="1319.9" cy="944.5" r="1.200"/><circle cx="1323.6" cy="944.5" r="1.200"/><circle cx="1327.2" cy="944.5" r="1.200"/><circle cx="1330.9" cy="944.5" r="1.200"/><circle cx="1334.5" cy="944.5" r="1.200"/><circle cx="1338.2" cy="944.5" r="1.200"/><circle cx="1341.8" cy="944.5" r="1.200"/><circle cx="1345.5" cy="911.8" r="1.200"/><circle cx="1349.1" cy="903.6" r="1.200"/><circle cx="1352.8" cy="903.6" r="1.200"/><circle cx="1356.4" cy="887.2" r="1.200"/><circle cx="1360" cy="920" r="1.200"/><circle cx="1363.7" cy="838.2" r="1.200"/><circle cx="1367.3" cy="854.5" r="1.200"/><circle cx="1371" cy="846.3" r="1.200"/><circle cx="1374.6" cy="862.7" r="1.200"/><circle cx="1378.3" cy="903.6" r="1.200"/><circle cx="1381.9" cy="887.2" r="1.200"/><circle cx="1385.6" cy="887.2" r="1.200"/><circle cx="1389.2" cy="928.1" r="1.200"/><circle cx="1392.8" cy="944.5" r="1.200"/><circle cx="1396.5" cy="936.3" r="1.200"/><circle cx="1400.1" cy="944.5" r="1.200"/><circle cx="1403.8" cy="944.5" r="1.200"/><circle cx="1407.4" cy="944.5" r="1.200"/><circle cx="1411.1" cy="944.5" r="1.200"/><circle cx="1414.7" cy="944.5" r="1.200"/><circle cx="1418.4" cy="928.1" r="1.200"/><circle cx="1422" cy="928.1" r="1.200"/><circle cx="1425.7" cy="920" r="1.200"/><circle cx="1429.3" cy="920" r="1.200"/><circle cx="1432.9" cy="936.3" r="1.200"/><circle cx="1436.6" cy="936.3" r="1.200"/><circle cx="1440.2" cy="911.8" r="1.200"/><circle cx="1443.9" cy="936.3" r="1.200"/><circle cx="1447.5" cy="895.4" r="1.200"/><circle cx="1451.2" cy="895.4" r="1.200"/><circle cx="1454.8" cy="911.8" r="1.200"/><circle cx="1458.5" cy="854.5" r="1.200"/><circle cx="1462.1" cy="895.4" r="1.200"/><circle cx="1465.7" cy="846.3" r="1.200"/><circle cx="1469.4" cy="920" r="1.200"/><circle cx="1473" cy="895.4" r="1.200"/><circle cx="1476.7" cy="911.8" r="1.200"/><circle cx="1480.3" cy="928.1" r="1.200"/><circle cx="1484" cy="944.5" r="1.200"/><circle cx="1487.6" cy="936.3" r="1.200"/><circle cx="1491.3" cy="944.5" r="1.200"/><circle cx="1494.9" cy="944.5" r="1.200"/><circle cx="1498.6" cy="944.5" r="1.200"/><circle cx="1502.2" cy="944.5" r="1.200"/><circle cx="1505.8" cy="936.3" r="1.200"/><circle cx="1509.5" cy="936.3" r="1.200"/><circle cx="1513.1" cy="944.5" r="1.200"/><circle cx="1516.8" cy="936.3" r="1.200"/><circle cx="1520.4" cy="920" r="1.200"/><circle cx="1524.1" cy="911.8" r="1.200"/><circle cx="1527.7" cy="928.1" r="1.200"/><circle cx="1531.4" cy="870.9" r="1.200"/><circle cx="1535" cy="870.9" r="1.200"/><circle cx="1538.6" cy="870.9" r="1.200"/><circle cx="1542.3" cy="838.2" r="1.200"/><circle cx="1545.9" cy="838.2" r="1.200"/><circle cx="1549.6" cy="887.2" r="1.200"/><circle cx="1553.2" cy="887.2" r="1.200"/><circle cx="1556.9" cy="870.9" r="1.200"/><circle cx="1560.5" cy="879.1" r="1.200"/><circle cx="1564.2" cy="920" r="1.200"/><circle cx="1567.8" cy="928.1" r="1.200"/><circle cx="1571.5" cy="936.3" r="1.200"/><circle cx="1575.1" cy="944.5" r="1.200"/><circle cx="1578.7" cy="936.3" r="1.200"/><circle cx="1582.4" cy="936.3" r="1.200"/><circle cx="1586" cy="944.5" r="1.200"/><circle cx="1589.7" cy="944.5" r="1.200"/><circle cx="1593.3" cy="944.5" r="1.200"/><circle cx="1597" cy="944.5" r="1.200"/><circle cx="1600.6" cy="944.5" r="1.200"/><circle cx="1604.3" cy="944.5" r="1.200"/><circle cx="1607.9" cy="936.3" r="1.200"/><circle cx="1611.5" cy="928.1" r="1.200"/><circle cx="1615.2" cy="903.6" r="1.200"/><circle cx="1618.8" cy="903.6" r="1.200"/><circle cx="1622.5" cy="911.8" r="1.200"/><circle cx="1626.1" cy="862.7" r="1.200"/><circle cx="1629.8" cy="830" r="1.200"/><circle cx="1633.4" cy="870.9" r="1.200"/></g><g fill="#fff" stroke="#6092C0" stroke-width="0.800"><circle cx="1024.7" cy="936.3" r="1.200"/><circle cx="1028.3" cy="903.6" r="1.200"/><circle cx="1032" cy="879.1" r="1.200"/><circle cx="1035.6" cy="920" r="1.200"/><circle cx="1039.3" cy="920" r="1.200"/><circle cx="1042.9" cy="928.1" r="1.200"/><circle cx="1046.6" cy="944.5" r="1.200"/><circle cx="1050.2" cy="944.5" r="1.200"/><circle cx="1053.9" cy="944.5" r="1.200"/><circle cx="1057.5" cy="944.5" r="1.200"/><circle cx="1061.2" cy="944.5" r="1.200"/><circle cx="1064.8" cy="944.5" r="1.200"/><circle cx="1068.4" cy="944.5" r="1.200"/><circle cx="1072.1" cy="944.5" r="1.200"/><circle cx="1075.7" cy="944.5" r="1.200"/><circle cx="1079.4" cy="936.3" r="1.200"/><circle cx="1083" cy="944.5" r="1.200"/><circle cx="1086.7" cy="911.8" r="1.200"/><circle cx="1090.3" cy="928.1" r="1.200"/><circle cx="1094" cy="887.2" r="1.200"/><circle cx="1097.6" cy="887.2" r="1.200"/><circle cx="1101.2" cy="895.4" r="1.200"/><circle cx="1104.9" cy="895.4" r="1.200"/><circle cx="1108.5" cy="846.3" r="1.200"/><circle cx="1112.2" cy="854.5" r="1.200"/><circle cx="1115.8" cy="879.1" r="1.200"/><circle cx="1119.5" cy="895.4" r="1.200"/><circle cx="1123.1" cy="879.1" r="1.200"/><circle cx="1126.8" cy="920" r="1.200"/><circle cx="1130.4" cy="920" r="1.200"/><circle cx="1134" cy="944.5" r="1.200"/><circle cx="1137.7" cy="936.3" r="1.200"/><circle cx="1141.3" cy="944.5" r="1.200"/><circle cx="1145" cy="944.5" r="1.200"/><circle cx="1148.6" cy="944.5" r="1.200"/><circle cx="1152.3" cy="944.5" r="1.200"/><circle cx="1155.9" cy="944.5" r="1.200"/><circle cx="1159.6" cy="944.5" r="1.200"/><circle cx="1163.2" cy="920" r="1.200"/><circle cx="1166.9" cy="936.3" r="1.200"/><circle cx="1170.5" cy="936.3" r="1.200"/><circle cx="1174.1" cy="911.8" r="1.200"/><circle cx="1177.8" cy="911.8" r="1.200"/><circle cx="1181.4" cy="920" r="1.200"/><circle cx="1185.1" cy="895.4" r="1.200"/><circle cx="1188.7" cy="895.4" r="1.200"/><circle cx="1192.4" cy="870.9" r="1.200"/><circle cx="1196" cy="903.6" r="1.200"/><circle cx="1199.7" cy="870.9" r="1.200"/><circle cx="1203.3" cy="920" r="1.200"/><circle cx="1207" cy="920" r="1.200"/><circle cx="1210.6" cy="887.2" r="1.200"/><circle cx="1214.2" cy="920" r="1.200"/><circle cx="1217.9" cy="944.5" r="1.200"/><circle cx="1221.5" cy="944.5" r="1.200"/><circle cx="1225.2" cy="944.5" r="1.200"/><circle cx="1228.8" cy="944.5" r="1.200"/><circle cx="1232.5" cy="944.5" r="1.200"/><circle cx="1236.1" cy="944.5" r="1.200"/><circle cx="1239.8" cy="944.5" r="1.200"/><circle cx="1243.4" cy="936.3" r="1.200"/><circle cx="1247" cy="920" r="1.200"/><circle cx="1250.7" cy="928.1" r="1.200"/><circle cx="1254.3" cy="936.3" r="1.200"/><circle cx="1258" cy="920" r="1.200"/><circle cx="1261.6" cy="936.3" r="1.200"/><circle cx="1265.3" cy="928.1" r="1.200"/><circle cx="1268.9" cy="903.6" r="1.200"/><circle cx="1272.6" cy="920" r="1.200"/><circle cx="1276.2" cy="870.9" r="1.200"/><circle cx="1279.9" cy="928.1" r="1.200"/><circle cx="1283.5" cy="879.1" r="1.200"/><circle cx="1287.1" cy="830" r="1.200"/><circle cx="1290.8" cy="895.4" r="1.200"/><circle cx="1294.4" cy="920" r="1.200"/><circle cx="1298.1" cy="846.3" r="1.200"/><circle cx="1301.7" cy="936.3" r="1.200"/><circle cx="1305.4" cy="936.3" r="1.200"/><circle cx="1309" cy="928.1" r="1.200"/><circle cx="1312.7" cy="911.8" r="1.200"/><circle cx="1316.3" cy="944.5" r="1.200"/><circle cx="1319.9" cy="944.5" r="1.200"/><circle cx="1323.6" cy="944.5" r="1.200"/><circle cx="1327.2" cy="944.5" r="1.200"/><circle cx="1330.9" cy="944.5" r="1.200"/><circle cx="1334.5" cy="944.5" r="1.200"/><circle cx="1338.2" cy="944.5" r="1.200"/><circle cx="1341.8" cy="936.3" r="1.200"/><circle cx="1345.5" cy="928.1" r="1.200"/><circle cx="1349.1" cy="936.3" r="1.200"/><circle cx="1352.8" cy="903.6" r="1.200"/><circle cx="1356.4" cy="903.6" r="1.200"/><circle cx="1360" cy="920" r="1.200"/><circle cx="1363.7" cy="895.4" r="1.200"/><circle cx="1367.3" cy="846.3" r="1.200"/><circle cx="1371" cy="920" r="1.200"/><circle cx="1374.6" cy="887.2" r="1.200"/><circle cx="1378.3" cy="920" r="1.200"/><circle cx="1381.9" cy="911.8" r="1.200"/><circle cx="1385.6" cy="911.8" r="1.200"/><circle cx="1389.2" cy="920" r="1.200"/><circle cx="1392.8" cy="936.3" r="1.200"/><circle cx="1396.5" cy="944.5" r="1.200"/><circle cx="1400.1" cy="944.5" r="1.200"/><circle cx="1403.8" cy="944.5" r="1.200"/><circle cx="1407.4" cy="944.5" r="1.200"/><circle cx="1411.1" cy="936.3" r="1.200"/><circle cx="1414.7" cy="944.5" r="1.200"/><circle cx="1418.4" cy="944.5" r="1.200"/><circle cx="1422" cy="944.5" r="1.200"/><circle cx="1425.7" cy="944.5" r="1.200"/><circle cx="1429.3" cy="936.3" r="1.200"/><circle cx="1432.9" cy="911.8" r="1.200"/><circle cx="1436.6" cy="936.3" r="1.200"/><circle cx="1440.2" cy="911.8" r="1.200"/><circle cx="1443.9" cy="928.1" r="1.200"/><circle cx="1447.5" cy="846.3" r="1.200"/><circle cx="1451.2" cy="895.4" r="1.200"/><circle cx="1454.8" cy="854.5" r="1.200"/><circle cx="1458.5" cy="838.2" r="1.200"/><circle cx="1462.1" cy="895.4" r="1.200"/><circle cx="1465.7" cy="903.6" r="1.200"/><circle cx="1469.4" cy="920" r="1.200"/><circle cx="1473" cy="911.8" r="1.200"/><circle cx="1476.7" cy="911.8" r="1.200"/><circle cx="1480.3" cy="936.3" r="1.200"/><circle cx="1484" cy="944.5" r="1.200"/><circle cx="1487.6" cy="944.5" r="1.200"/><circle cx="1491.3" cy="944.5" r="1.200"/><circle cx="1494.9" cy="944.5" r="1.200"/><circle cx="1498.6" cy="944.5" r="1.200"/><circle cx="1502.2" cy="944.5" r="1.200"/><circle cx="1505.8" cy="944.5" r="1.200"/><circle cx="1509.5" cy="944.5" r="1.200"/><circle cx="1513.1" cy="936.3" r="1.200"/><circle cx="1516.8" cy="944.5" r="1.200"/><circle cx="1520.4" cy="944.5" r="1.200"/><circle cx="1524.1" cy="936.3" r="1.200"/><circle cx="1527.7" cy="903.6" r="1.200"/><circle cx="1531.4" cy="895.4" r="1.200"/><circle cx="1535" cy="903.6" r="1.200"/><circle cx="1538.6" cy="887.2" r="1.200"/><circle cx="1542.3" cy="870.9" r="1.200"/><circle cx="1545.9" cy="887.2" r="1.200"/><circle cx="1549.6" cy="862.7" r="1.200"/><circle cx="1553.2" cy="879.1" r="1.200"/><circle cx="1556.9" cy="887.2" r="1.200"/><circle cx="1560.5" cy="903.6" r="1.200"/><circle cx="1564.2" cy="944.5" r="1.200"/><circle cx="1567.8" cy="920" r="1.200"/><circle cx="1571.5" cy="944.5" r="1.200"/><circle cx="1575.1" cy="944.5" r="1.200"/><circle cx="1578.7" cy="944.5" r="1.200"/><circle cx="1582.4" cy="944.5" r="1.200"/><circle cx="1586" cy="944.5" r="1.200"/><circle cx="1589.7" cy="944.5" r="1.200"/><circle cx="1593.3" cy="944.5" r="1.200"/><circle cx="1597" cy="944.5" r="1.200"/><circle cx="1600.6" cy="944.5" r="1.200"/><circle cx="1604.3" cy="936.3" r="1.200"/><circle cx="1607.9" cy="936.3" r="1.200"/><circle cx="1611.5" cy="936.3" r="1.200"/><circle cx="1615.2" cy="920" r="1.200"/><circle cx="1618.8" cy="903.6" r="1.200"/><circle cx="1622.5" cy="879.1" r="1.200"/><circle cx="1626.1" cy="887.2" r="1.200"/><circle cx="1629.8" cy="879.1" r="1.200"/><circle cx="1633.4" cy="895.4" r="1.200"/></g><g fill="#fff" stroke="#D36086" stroke-width="0.800"><circle cx="1024.7" cy="920" r="1.200"/><circle cx="1028.3" cy="887.2" r="1.200"/><circle cx="1032" cy="862.7" r="1.200"/><circle cx="1035.6" cy="911.8" r="1.200"/><circle cx="1039.3" cy="911.8" r="1.200"/><circle cx="1042.9" cy="920" r="1.200"/><circle cx="1046.6" cy="936.3" r="1.200"/><circle cx="1050.2" cy="936.3" r="1.200"/><circle cx="1053.9" cy="936.3" r="1.200"/><circle cx="1057.5" cy="944.5" r="1.200"/><circle cx="1061.2" cy="944.5" r="1.200"/><circle cx="1064.8" cy="944.5" r="1.200"/><circle cx="1068.4" cy="944.5" r="1.200"/><circle cx="1072.1" cy="944.5" r="1.200"/><circle cx="1075.7" cy="936.3" r="1.200"/><circle cx="1079.4" cy="944.5" r="1.200"/><circle cx="1083" cy="928.1" r="1.200"/><circle cx="1086.7" cy="936.3" r="1.200"/><circle cx="1090.3" cy="920" r="1.200"/><circle cx="1094" cy="887.2" r="1.200"/><circle cx="1097.6" cy="895.4" r="1.200"/><circle cx="1101.2" cy="879.1" r="1.200"/><circle cx="1104.9" cy="879.1" r="1.200"/><circle cx="1108.5" cy="879.1" r="1.200"/><circle cx="1112.2" cy="911.8" r="1.200"/><circle cx="1115.8" cy="911.8" r="1.200"/><circle cx="1119.5" cy="911.8" r="1.200"/><circle cx="1123.1" cy="920" r="1.200"/><circle cx="1126.8" cy="928.1" r="1.200"/><circle cx="1130.4" cy="944.5" r="1.200"/><circle cx="1134" cy="936.3" r="1.200"/><circle cx="1137.7" cy="944.5" r="1.200"/><circle cx="1141.3" cy="944.5" r="1.200"/><circle cx="1145" cy="944.5" r="1.200"/><circle cx="1148.6" cy="936.3" r="1.200"/><circle cx="1152.3" cy="936.3" r="1.200"/><circle cx="1155.9" cy="944.5" r="1.200"/><circle cx="1159.6" cy="944.5" r="1.200"/><circle cx="1163.2" cy="944.5" r="1.200"/><circle cx="1166.9" cy="928.1" r="1.200"/><circle cx="1170.5" cy="920" r="1.200"/><circle cx="1174.1" cy="936.3" r="1.200"/><circle cx="1177.8" cy="895.4" r="1.200"/><circle cx="1181.4" cy="911.8" r="1.200"/><circle cx="1185.1" cy="936.3" r="1.200"/><circle cx="1188.7" cy="870.9" r="1.200"/><circle cx="1192.4" cy="936.3" r="1.200"/><circle cx="1196" cy="870.9" r="1.200"/><circle cx="1199.7" cy="903.6" r="1.200"/><circle cx="1203.3" cy="887.2" r="1.200"/><circle cx="1207" cy="911.8" r="1.200"/><circle cx="1210.6" cy="920" r="1.200"/><circle cx="1214.2" cy="911.8" r="1.200"/><circle cx="1217.9" cy="936.3" r="1.200"/><circle cx="1221.5" cy="920" r="1.200"/><circle cx="1225.2" cy="936.3" r="1.200"/><circle cx="1228.8" cy="944.5" r="1.200"/><circle cx="1232.5" cy="944.5" r="1.200"/><circle cx="1236.1" cy="944.5" r="1.200"/><circle cx="1239.8" cy="944.5" r="1.200"/><circle cx="1243.4" cy="944.5" r="1.200"/><circle cx="1247" cy="944.5" r="1.200"/><circle cx="1250.7" cy="936.3" r="1.200"/><circle cx="1254.3" cy="928.1" r="1.200"/><circle cx="1258" cy="928.1" r="1.200"/><circle cx="1261.6" cy="903.6" r="1.200"/><circle cx="1265.3" cy="920" r="1.200"/><circle cx="1268.9" cy="887.2" r="1.200"/><circle cx="1272.6" cy="879.1" r="1.200"/><circle cx="1276.2" cy="895.4" r="1.200"/><circle cx="1279.9" cy="903.6" r="1.200"/><circle cx="1283.5" cy="887.2" r="1.200"/><circle cx="1287.1" cy="911.8" r="1.200"/><circle cx="1290.8" cy="879.1" r="1.200"/><circle cx="1294.4" cy="920" r="1.200"/><circle cx="1298.1" cy="903.6" r="1.200"/><circle cx="1301.7" cy="911.8" r="1.200"/><circle cx="1305.4" cy="928.1" r="1.200"/><circle cx="1309" cy="944.5" r="1.200"/><circle cx="1312.7" cy="944.5" r="1.200"/><circle cx="1316.3" cy="944.5" r="1.200"/><circle cx="1319.9" cy="944.5" r="1.200"/><circle cx="1323.6" cy="944.5" r="1.200"/><circle cx="1327.2" cy="944.5" r="1.200"/><circle cx="1330.9" cy="936.3" r="1.200"/><circle cx="1334.5" cy="944.5" r="1.200"/><circle cx="1338.2" cy="928.1" r="1.200"/><circle cx="1341.8" cy="944.5" r="1.200"/><circle cx="1345.5" cy="928.1" r="1.200"/><circle cx="1349.1" cy="895.4" r="1.200"/><circle cx="1352.8" cy="911.8" r="1.200"/><circle cx="1356.4" cy="920" r="1.200"/><circle cx="1360" cy="911.8" r="1.200"/><circle cx="1363.7" cy="903.6" r="1.200"/><circle cx="1367.3" cy="870.9" r="1.200"/><circle cx="1371" cy="838.2" r="1.200"/><circle cx="1374.6" cy="879.1" r="1.200"/><circle cx="1378.3" cy="903.6" r="1.200"/><circle cx="1381.9" cy="903.6" r="1.200"/><circle cx="1385.6" cy="911.8" r="1.200"/><circle cx="1389.2" cy="911.8" r="1.200"/><circle cx="1392.8" cy="944.5" r="1.200"/><circle cx="1396.5" cy="944.5" r="1.200"/><circle cx="1400.1" cy="936.3" r="1.200"/><circle cx="1403.8" cy="944.5" r="1.200"/><circle cx="1407.4" cy="936.3" r="1.200"/><circle cx="1411.1" cy="944.5" r="1.200"/><circle cx="1414.7" cy="944.5" r="1.200"/><circle cx="1418.4" cy="936.3" r="1.200"/><circle cx="1422" cy="944.5" r="1.200"/><circle cx="1425.7" cy="936.3" r="1.200"/><circle cx="1429.3" cy="920" r="1.200"/><circle cx="1432.9" cy="920" r="1.200"/><circle cx="1436.6" cy="928.1" r="1.200"/><circle cx="1440.2" cy="936.3" r="1.200"/><circle cx="1443.9" cy="911.8" r="1.200"/><circle cx="1447.5" cy="895.4" r="1.200"/><circle cx="1451.2" cy="870.9" r="1.200"/><circle cx="1454.8" cy="911.8" r="1.200"/><circle cx="1458.5" cy="862.7" r="1.200"/><circle cx="1462.1" cy="895.4" r="1.200"/><circle cx="1465.7" cy="895.4" r="1.200"/><circle cx="1469.4" cy="879.1" r="1.200"/><circle cx="1473" cy="895.4" r="1.200"/><circle cx="1476.7" cy="911.8" r="1.200"/><circle cx="1480.3" cy="944.5" r="1.200"/><circle cx="1484" cy="936.3" r="1.200"/><circle cx="1487.6" cy="944.5" r="1.200"/><circle cx="1491.3" cy="944.5" r="1.200"/><circle cx="1494.9" cy="944.5" r="1.200"/><circle cx="1498.6" cy="944.5" r="1.200"/><circle cx="1502.2" cy="944.5" r="1.200"/><circle cx="1505.8" cy="944.5" r="1.200"/><circle cx="1509.5" cy="936.3" r="1.200"/><circle cx="1513.1" cy="944.5" r="1.200"/><circle cx="1516.8" cy="944.5" r="1.200"/><circle cx="1520.4" cy="928.1" r="1.200"/><circle cx="1524.1" cy="928.1" r="1.200"/><circle cx="1527.7" cy="920" r="1.200"/><circle cx="1531.4" cy="936.3" r="1.200"/><circle cx="1535" cy="903.6" r="1.200"/><circle cx="1538.6" cy="870.9" r="1.200"/><circle cx="1542.3" cy="911.8" r="1.200"/><circle cx="1545.9" cy="911.8" r="1.200"/><circle cx="1549.6" cy="887.2" r="1.200"/><circle cx="1553.2" cy="936.3" r="1.200"/><circle cx="1556.9" cy="887.2" r="1.200"/><circle cx="1560.5" cy="920" r="1.200"/><circle cx="1564.2" cy="928.1" r="1.200"/><circle cx="1567.8" cy="944.5" r="1.200"/><circle cx="1571.5" cy="936.3" r="1.200"/><circle cx="1575.1" cy="944.5" r="1.200"/><circle cx="1578.7" cy="944.5" r="1.200"/><circle cx="1582.4" cy="944.5" r="1.200"/><circle cx="1586" cy="936.3" r="1.200"/><circle cx="1589.7" cy="944.5" r="1.200"/><circle cx="1593.3" cy="944.5" r="1.200"/><circle cx="1597" cy="936.3" r="1.200"/><circle cx="1600.6" cy="944.5" r="1.200"/><circle cx="1604.3" cy="928.1" r="1.200"/><circle cx="1607.9" cy="920" r="1.200"/><circle cx="1611.5" cy="928.1" r="1.200"/><circle cx="1615.2" cy="944.5" r="1.200"/><circle cx="1618.8" cy="895.4" r="1.200"/><circle cx="1622.5" cy="903.6" r="1.200"/><circle cx="1626.1" cy="862.7" r="1.200"/><circle cx="1629.8" cy="846.3" r="1.200"/><circle cx="1633.4" cy="870.9" r="1.200"/></g><circle cx="1695" cy="674.1" r="4" fill="#54B399"/><text x="1707.400" y="678.6" font-size="12.600" fill="#2A3947" textLength="33.6" lengthAdjust="spacingAndGlyphs">Count</text><text x="1882.600" y="678.6" font-size="12.600" fill="#2A3947" text-anchor="end">24</text><circle cx="1695" cy="696.1" r="4" fill="#54B399"/><text x="1707.400" y="700.6" font-size="12.600" fill="#2A3947" textLength="148.3" lengthAdjust="spacingAndGlyphs">Mozilla/5.0 (X11; Linux x86</text><circle cx="1858.5" cy="699.8" r="0.750" fill="#2A3947"/><circle cx="1862.3" cy="699.8" r="0.750" fill="#2A3947"/><circle cx="1866.1" cy="699.8" r="0.750" fill="#2A3947"/><text x="1882.600" y="700.6" font-size="12.600" fill="#2A3947" text-anchor="end">9</text><circle cx="1695" cy="718" r="4" fill="#6092C0"/><text x="1707.400" y="722.5" font-size="12.600" fill="#2A3947" textLength="152.4" lengthAdjust="spacingAndGlyphs">Mozilla/5.0 (X11; Linux i686</text><circle cx="1862.5" cy="721.7" r="0.750" fill="#2A3947"/><circle cx="1866.3" cy="721.7" r="0.750" fill="#2A3947"/><circle cx="1870.1" cy="721.7" r="0.750" fill="#2A3947"/><text x="1882.600" y="722.5" font-size="12.600" fill="#2A3947" text-anchor="end">6</text><circle cx="1695" cy="740" r="4" fill="#D36086"/><text x="1707.400" y="744.5" font-size="12.600" fill="#2A3947" textLength="148.7" lengthAdjust="spacingAndGlyphs">Mozilla/4.0 (compatible; M</text><circle cx="1859" cy="743.7" r="0.750" fill="#2A3947"/><circle cx="1862.8" cy="743.7" r="0.750" fill="#2A3947"/><circle cx="1866.6" cy="743.7" r="0.750" fill="#2A3947"/><text x="1882.600" y="744.5" font-size="12.600" fill="#2A3947" text-anchor="end">9</text></svg><svg style="left:927px;top:397px" width="6" height="6" viewBox="0 0 6 6"><path d="M5 0V5H0" fill="none" stroke="#55626F" stroke-width="2" stroke-linejoin="miter"/></svg></div>
</body></html>
